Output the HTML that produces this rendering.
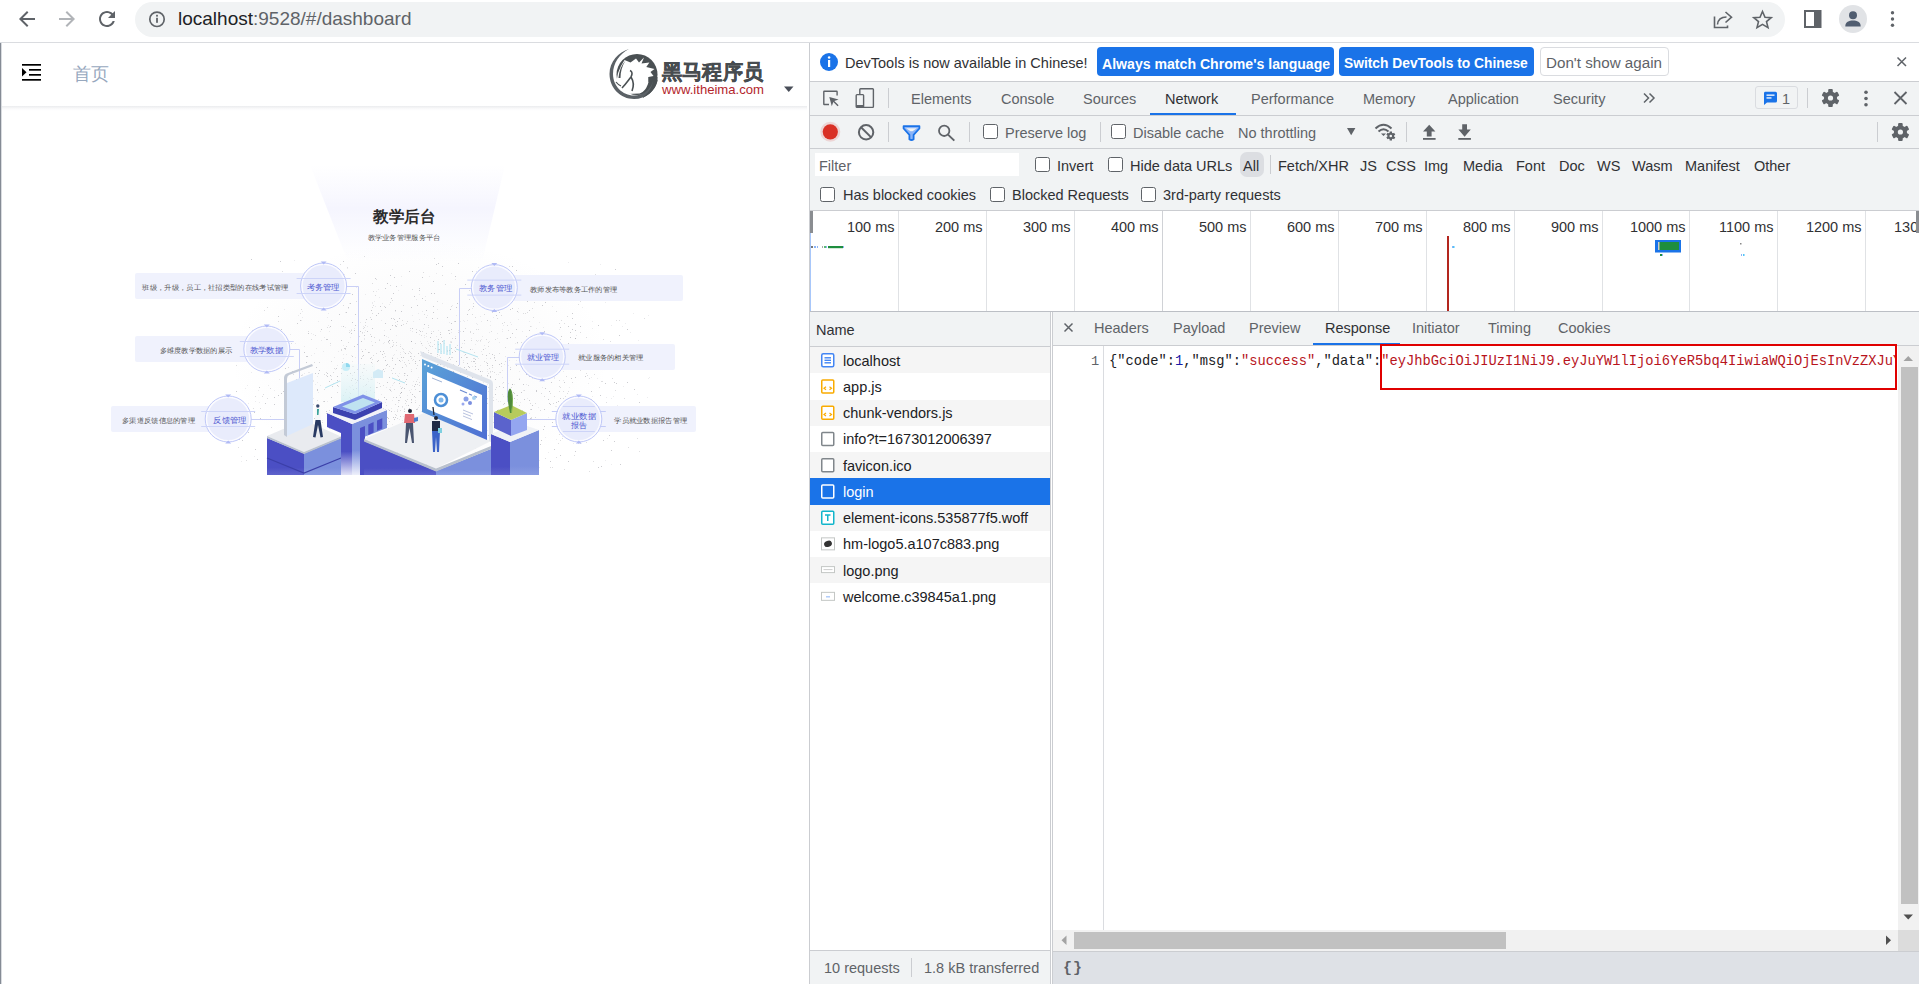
<!DOCTYPE html>
<html><head><meta charset="utf-8">
<style>
*{margin:0;padding:0;box-sizing:border-box}
html,body{width:1919px;height:984px;overflow:hidden;background:#fff;font-family:"Liberation Sans",sans-serif;position:relative}
.a{position:absolute}
.t{position:absolute;white-space:nowrap;line-height:20px;height:20px}
.dt{font-size:14.5px;color:#303134}
.g{color:#5f6368}
.cb{position:absolute;width:15px;height:15px;border:1.5px solid #5f6368;border-radius:2.5px;background:#fff}
.sep{position:absolute;width:1px;background:#cbcdd1}
.hl{position:absolute;height:1px;background:#cbcdd1}
</style></head>
<body>
<!-- ===== Browser chrome ===== -->
<div class="a" style="left:0;top:0;width:1919px;height:42px;background:#fff"></div>
<div class="hl" style="left:0;top:42px;width:1919px;background:#dadce0"></div>
<div id="chrome-icons"></div>
<div class="a" style="left:135px;top:2px;width:1650px;height:35px;border-radius:17.5px;background:#f1f3f4"></div>
<div class="t" style="left:178px;top:9px;font-size:19px;color:#5f6368"><span style="color:#202124">localhost</span>:9528/#/dashboard</div>

<!-- ===== Left page ===== -->
<div class="a" style="left:0;top:43px;width:1px;height:941px;background:#858b95"></div><div class="a" style="left:1px;top:43px;width:1px;height:941px;background:#d9dce0"></div>
<div class="a" style="left:2px;top:106px;width:805px;height:5px;background:linear-gradient(#ebecee,#fbfbfc 60%,#fff)"></div>
<div class="t" style="left:73px;top:64px;font-size:18px;color:#97a8be">首页</div>

<div id="logo">
<svg class="a" style="left:600px;top:44px" width="180" height="60">
<circle cx="37" cy="30.5" r="20.5" fill="#4a5053"/>
<path d="M16,40 L18,29 L21,22 L24.5,16 L30.5,18.5 L36,14.5 L39,18.5 L44,13.5 L41.5,19.5 L49.4,18.5 L46.3,23 L54.5,25 L50.5,28 L53.5,32 L48.5,33 L48.5,38 C47,44 44,48 39.6,49.5 L27.4,50 L18,42 Z" fill="#fff"/>
<path d="M18.5,34 C19,27 21.5,21 25.5,16.5 C22,22 20.5,28 20.5,34 Z" fill="#4a5053"/>
<path d="M30,26.5 C32.5,27.5 32.5,30 31,33 C33.5,37 34,42 32,47 M31,33 C28.5,36 26,40 22,44" fill="none" stroke="#4a5053" stroke-width="1.6"/>
<path d="M16,38 C17.5,40 19,41 21,42" fill="none" stroke="#4a5053" stroke-width="1.2"/>
<path d="M29,5 C18.5,8 9.5,17.5 9.5,30 C9.5,44 20.5,55 34,55 C46,55 55.5,47 57.5,36 L53,37 C51,45.5 43,51.5 34,51.5 C22.5,51.5 13,42 13,30 C13,19 19.5,10 29,5 Z" fill="#5b6166"/>
<path d="M48.5,33 L57.5,33 L57.5,37 C56,44 50,51 42,54 C49,49 52,43 53,37 L48.5,38 Z" fill="#4a5053"/>
<text x="62" y="35" font-size="20.5" font-weight="bold" fill="#474c50" stroke="#474c50" stroke-width="0.35" font-family="Liberation Sans, sans-serif" textLength="101" lengthAdjust="spacingAndGlyphs">黑马程序员</text>
<text x="62" y="50" font-size="13.6" fill="#b3262c" font-family="Liberation Sans, sans-serif" textLength="102" lengthAdjust="spacingAndGlyphs">www.itheima.com</text>
</svg>

</div>
<!-- ===== DevTools ===== -->
<div class="a" style="left:809px;top:43px;width:1px;height:941px;background:#cbcdd1"></div>
<!-- info bar -->
<div class="a" style="left:810px;top:43px;width:1109px;height:38px;background:#fff"></div>
<div class="hl" style="left:810px;top:81px;width:1109px"></div>
<div class="t dt" style="left:845px;top:53px">DevTools is now available in Chinese!</div>
<div class="a" style="left:1097px;top:47px;width:237px;height:29px;border-radius:4px;background:#1a73e8"></div>
<div class="t" style="left:1102px;top:53.5px;font-size:14.1px;font-weight:bold;color:#fff">Always match Chrome's language</div>
<div class="a" style="left:1339px;top:47px;width:195px;height:29px;border-radius:4px;background:#1a73e8"></div>
<div class="t" style="left:1344px;top:53.5px;font-size:13.8px;font-weight:bold;color:#fff">Switch DevTools to Chinese</div>
<div class="a" style="left:1540px;top:47px;width:129px;height:29px;border-radius:4px;background:#fff;border:1px solid #dadce0"></div>
<div class="t dt g" style="left:1546px;top:53px;font-size:15.2px">Don't show again</div>

<!-- main tab toolbar -->
<div class="a" style="left:810px;top:82px;width:1109px;height:33px;background:#f1f3f4"></div>
<div class="hl" style="left:810px;top:115px;width:1109px"></div>
<div class="sep" style="left:888px;top:88px;height:20px"></div>
<div class="t dt g" style="left:911px;top:89px">Elements</div>
<div class="t dt g" style="left:1001px;top:89px">Console</div>
<div class="t dt g" style="left:1083px;top:89px">Sources</div>
<div class="t dt" style="left:1165px;top:89px">Network</div>
<div class="a" style="left:1150px;top:113px;width:86px;height:2px;background:#1a73e8"></div>
<div class="t dt g" style="left:1251px;top:89px">Performance</div>
<div class="t dt g" style="left:1363px;top:89px">Memory</div>
<div class="t dt g" style="left:1448px;top:89px">Application</div>
<div class="t dt g" style="left:1553px;top:89px">Security</div>
<div class="a" style="left:1755px;top:86px;width:43px;height:23px;border:1px solid #dadce0;border-radius:3px"></div>
<div class="t dt g" style="left:1782px;top:89px">1</div>
<div class="sep" style="left:1807px;top:88px;height:20px"></div>

<!-- network toolbar -->
<div class="a" style="left:810px;top:116px;width:1109px;height:32px;background:#f1f3f4"></div>
<div class="hl" style="left:810px;top:148px;width:1109px"></div>
<div class="sep" style="left:888px;top:122px;height:20px"></div>
<div class="sep" style="left:969px;top:122px;height:20px"></div>
<div class="cb" style="left:983px;top:124px"></div>
<div class="t dt g" style="left:1005px;top:123px">Preserve log</div>
<div class="sep" style="left:1100px;top:122px;height:20px"></div>
<div class="cb" style="left:1111px;top:124px"></div>
<div class="t dt g" style="left:1133px;top:123px">Disable cache</div>
<div class="t dt g" style="left:1238px;top:123px">No throttling</div>
<div class="sep" style="left:1406px;top:122px;height:20px"></div>
<div class="sep" style="left:1877px;top:122px;height:20px"></div>

<!-- filter row -->
<div class="a" style="left:810px;top:149px;width:1109px;height:61px;background:#f1f3f4"></div>
<div class="a" style="left:815px;top:153px;width:204px;height:23px;background:#fff"></div>
<div class="t dt g" style="left:819px;top:155.5px">Filter</div>
<div class="cb" style="left:1035px;top:157px"></div>
<div class="t dt" style="left:1057px;top:155.5px">Invert</div>
<div class="cb" style="left:1108px;top:157px"></div>
<div class="t dt" style="left:1130px;top:155.5px">Hide data URLs</div>
<div class="a" style="left:1240px;top:152px;width:24px;height:25px;border-radius:7px;background:#dcdee2"></div>
<div class="t dt" style="left:1243px;top:155.5px">All</div>
<div class="sep" style="left:1270px;top:155px;height:19px"></div>
<div class="t dt" style="left:1278px;top:155.5px">Fetch/XHR</div>
<div class="t dt" style="left:1360px;top:155.5px">JS</div>
<div class="t dt" style="left:1386px;top:155.5px">CSS</div>
<div class="t dt" style="left:1424px;top:155.5px">Img</div>
<div class="t dt" style="left:1463px;top:155.5px">Media</div>
<div class="t dt" style="left:1516px;top:155.5px">Font</div>
<div class="t dt" style="left:1559px;top:155.5px">Doc</div>
<div class="t dt" style="left:1597px;top:155.5px">WS</div>
<div class="t dt" style="left:1632px;top:155.5px">Wasm</div>
<div class="t dt" style="left:1685px;top:155.5px">Manifest</div>
<div class="t dt" style="left:1754px;top:155.5px">Other</div>
<div class="cb" style="left:820px;top:187px"></div>
<div class="t dt" style="left:843px;top:185px">Has blocked cookies</div>
<div class="cb" style="left:990px;top:187px"></div>
<div class="t dt" style="left:1012px;top:185px">Blocked Requests</div>
<div class="cb" style="left:1141px;top:187px"></div>
<div class="t dt" style="left:1163px;top:185px">3rd-party requests</div>
<div class="hl" style="left:810px;top:210px;width:1109px"></div>

<!-- overview -->
<div class="a" style="left:810px;top:211px;width:1109px;height:100px;background:#fff"></div>
<div id="overview">
<div class="a" style="left:898px;top:211px;width:1px;height:100px;background:#e0e2e5"></div>
<div class="t dt" style="left:798px;top:216.5px;width:96.5px;text-align:right">100 ms</div>
<div class="a" style="left:986px;top:211px;width:1px;height:100px;background:#e0e2e5"></div>
<div class="t dt" style="left:886px;top:216.5px;width:96.5px;text-align:right">200 ms</div>
<div class="a" style="left:1074px;top:211px;width:1px;height:100px;background:#e0e2e5"></div>
<div class="t dt" style="left:974px;top:216.5px;width:96.5px;text-align:right">300 ms</div>
<div class="a" style="left:1162px;top:211px;width:1px;height:100px;background:#d0d2d6"></div>
<div class="t dt" style="left:1062px;top:216.5px;width:96.5px;text-align:right">400 ms</div>
<div class="a" style="left:1250px;top:211px;width:1px;height:100px;background:#e0e2e5"></div>
<div class="t dt" style="left:1150px;top:216.5px;width:96.5px;text-align:right">500 ms</div>
<div class="a" style="left:1338px;top:211px;width:1px;height:100px;background:#e0e2e5"></div>
<div class="t dt" style="left:1238px;top:216.5px;width:96.5px;text-align:right">600 ms</div>
<div class="a" style="left:1426px;top:211px;width:1px;height:100px;background:#e0e2e5"></div>
<div class="t dt" style="left:1326px;top:216.5px;width:96.5px;text-align:right">700 ms</div>
<div class="a" style="left:1514px;top:211px;width:1px;height:100px;background:#e0e2e5"></div>
<div class="t dt" style="left:1414px;top:216.5px;width:96.5px;text-align:right">800 ms</div>
<div class="a" style="left:1602px;top:211px;width:1px;height:100px;background:#e0e2e5"></div>
<div class="t dt" style="left:1502px;top:216.5px;width:96.5px;text-align:right">900 ms</div>
<div class="a" style="left:1689px;top:211px;width:1px;height:100px;background:#e0e2e5"></div>
<div class="t dt" style="left:1589px;top:216.5px;width:96.5px;text-align:right">1000 ms</div>
<div class="a" style="left:1777px;top:211px;width:1px;height:100px;background:#e0e2e5"></div>
<div class="t dt" style="left:1677px;top:216.5px;width:96.5px;text-align:right">1100 ms</div>
<div class="a" style="left:1865px;top:211px;width:1px;height:100px;background:#e0e2e5"></div>
<div class="t dt" style="left:1765px;top:216.5px;width:96.5px;text-align:right">1200 ms</div>
<div class="t dt" style="left:1894px;top:216.5px">1300 ms</div>
<div class="a" style="left:1916px;top:211px;width:3px;height:22px;background:#8a8d91"></div>
<div class="a" style="left:810px;top:211px;width:3px;height:22px;background:#8a8d91"></div>
<div class="a" style="left:810px;top:233px;width:1px;height:78px;background:#a8c7fa"></div>
<svg class="a" style="left:0;top:0" width="1919" height="984">
<rect x="811" y="246" width="2" height="2" fill="#777"/><rect x="814" y="246" width="2" height="2" fill="#8ab4f8"/><rect x="817" y="246" width="1" height="2" fill="#8ab4f8"/>
<rect x="822" y="246" width="1" height="2" fill="#aaa"/><rect x="824" y="246" width="2" height="2" fill="#5bb974"/><rect x="826" y="246" width="1" height="2" fill="#8ab4f8"/>
<rect x="828" y="246" width="15" height="2.2" fill="#1e8e3e"/><rect x="843" y="246" width="1" height="2" fill="#8ab4f8"/>
<rect x="1447" y="236" width="2" height="75" fill="#b3261e"/>
<rect x="1452" y="246" width="1" height="2" fill="#8ab4f8"/><rect x="1453" y="246" width="1.5" height="2" fill="#4fc3f7"/>
<rect x="1655" y="240" width="26" height="12.5" fill="#1a73e8"/>
<rect x="1658" y="242" width="21" height="8" fill="#1e8e3e"/><rect x="1658" y="242" width="1.5" height="8" fill="#ccc"/>
<rect x="1660" y="254" width="2" height="2" fill="#1e8e3e"/><rect x="1662" y="254" width="1" height="2" fill="#8ab4f8"/>
<rect x="1740" y="243" width="1.5" height="1.5" fill="#888"/>
<rect x="1741" y="254" width="1" height="2" fill="#8ab4f8"/><rect x="1743" y="254" width="1.5" height="2" fill="#4fc3f7"/>
</svg>
</div>
<div class="a" style="left:810px;top:311px;width:1109px;height:1px;background:#bcbfc5"></div>

<!-- list panel -->
<div class="a" style="left:810px;top:312px;width:240px;height:34px;background:#f1f3f4"></div>
<div class="hl" style="left:810px;top:346px;width:240px"></div>
<div class="t dt" style="left:816px;top:320px">Name</div>
<div id="rows">
<div class="a" style="left:810px;top:347.00px;width:240px;height:26.25px;background:#f5f5f5"></div>
<div class="t dt" style="left:843px;top:350.60px;color:#202124">localhost</div>
<div class="a" style="left:810px;top:373.25px;width:240px;height:26.25px;background:#fff"></div>
<div class="t dt" style="left:843px;top:376.85px;color:#202124">app.js</div>
<div class="a" style="left:810px;top:399.50px;width:240px;height:26.25px;background:#f5f5f5"></div>
<div class="t dt" style="left:843px;top:403.10px;color:#202124">chunk-vendors.js</div>
<div class="a" style="left:810px;top:425.75px;width:240px;height:26.25px;background:#fff"></div>
<div class="t dt" style="left:843px;top:429.35px;color:#202124">info?t=1673012006397</div>
<div class="a" style="left:810px;top:452.00px;width:240px;height:26.25px;background:#f5f5f5"></div>
<div class="t dt" style="left:843px;top:455.60px;color:#202124">favicon.ico</div>
<div class="a" style="left:810px;top:478.25px;width:240px;height:26.25px;background:#1a73e8"></div>
<div class="t dt" style="left:843px;top:481.85px;color:#fff">login</div>
<div class="a" style="left:810px;top:504.50px;width:240px;height:26.25px;background:#f5f5f5"></div>
<div class="t dt" style="left:843px;top:508.10px;color:#202124">element-icons.535877f5.woff</div>
<div class="a" style="left:810px;top:530.75px;width:240px;height:26.25px;background:#fff"></div>
<div class="t dt" style="left:843px;top:534.35px;color:#202124">hm-logo5.a107c883.png</div>
<div class="a" style="left:810px;top:557.00px;width:240px;height:26.25px;background:#f5f5f5"></div>
<div class="t dt" style="left:843px;top:560.60px;color:#202124">logo.png</div>
<div class="a" style="left:810px;top:583.25px;width:240px;height:26.25px;background:#fff"></div>
<div class="t dt" style="left:843px;top:586.85px;color:#202124">welcome.c39845a1.png</div>
<svg class="a" style="left:0;top:0" width="1919" height="984"><rect x="821.75" y="353.85" width="12" height="13" rx="1.5" fill="#fff" stroke="#4285f4" stroke-width="1.5"/><rect x="824.5" y="357.1" width="6.5" height="1.4" fill="#4285f4"/><rect x="824.5" y="359.6" width="6.5" height="1.4" fill="#4285f4"/><rect x="824.5" y="362.1" width="6.5" height="1.4" fill="#4285f4"/><rect x="821.75" y="380.1" width="12" height="13" rx="1" fill="#fff" stroke="#f9ab00" stroke-width="1.5"/><path d="M826,386.85 l-2,1.5 l2,1.5 M829.5,386.85 l2,1.5 l-2,1.5" fill="none" stroke="#f9ab00" stroke-width="1.2"/><rect x="821.75" y="406.35" width="12" height="13" rx="1" fill="#fff" stroke="#f9ab00" stroke-width="1.5"/><path d="M826,413.1 l-2,1.5 l2,1.5 M829.5,413.1 l2,1.5 l-2,1.5" fill="none" stroke="#f9ab00" stroke-width="1.2"/><rect x="821.75" y="432.6" width="12" height="13" rx="1" fill="#fff" stroke="#80868b" stroke-width="1.5"/><rect x="821.75" y="458.85" width="12" height="13" rx="1" fill="#fff" stroke="#80868b" stroke-width="1.5"/><rect x="821.75" y="485.1" width="12" height="13" rx="1" fill="#1a73e8" stroke="#fff" stroke-width="1.5"/><rect x="821.75" y="511.35" width="12" height="13" rx="1" fill="#fff" stroke="#12b5cb" stroke-width="1.5"/><path d="M825,515.1 h5.5 M827.75,515.1 v6" fill="none" stroke="#12b5cb" stroke-width="1.5"/><rect x="821.5" y="537.85" width="13" height="12" fill="#fff" stroke="#c4c7c5" stroke-width="1"/><ellipse cx="828" cy="543.85" rx="4" ry="3" fill="#333" transform="rotate(-20 828 543.85)"/><rect x="821.5" y="566.6" width="13" height="6" fill="#fff" stroke="#c4c7c5" stroke-width="1"/><rect x="823.5" y="569.1" width="9" height="1" fill="#ccc"/><rect x="821.5" y="592.35" width="13" height="8" fill="#fff" stroke="#c4c7c5" stroke-width="1"/><rect x="826" y="596.35" width="4" height="1" fill="#8ab4f8"/></svg>
</div>
<div class="a" style="left:1050px;top:312px;width:1px;height:672px;background:#cbcdd1"></div>
<div class="a" style="left:810px;top:950px;width:240px;height:1px;background:#cbcdd1"></div>
<div class="a" style="left:810px;top:951px;width:240px;height:33px;background:#f1f3f4"></div>
<div class="t dt g" style="left:824px;top:958px">10 requests</div>
<div class="sep" style="left:911px;top:958px;height:19px"></div>
<div class="t dt g" style="left:924px;top:958px">1.8 kB transferred</div>

<!-- response panel -->
<div class="a" style="left:1052px;top:312px;width:1px;height:672px;background:#cbcdd1"></div>
<div class="a" style="left:1053px;top:312px;width:866px;height:33px;background:#f1f3f4"></div>
<div class="hl" style="left:1053px;top:345px;width:866px"></div>
<div class="t dt g" style="left:1094px;top:318px">Headers</div>
<div class="t dt g" style="left:1173px;top:318px">Payload</div>
<div class="t dt g" style="left:1249px;top:318px">Preview</div>
<div class="t dt" style="left:1325px;top:318px">Response</div>
<div class="a" style="left:1313px;top:343px;width:87px;height:2px;background:#1a73e8"></div>
<div class="t dt g" style="left:1412px;top:318px">Initiator</div>
<div class="t dt g" style="left:1488px;top:318px">Timing</div>
<div class="t dt g" style="left:1558px;top:318px">Cookies</div>
<div class="a" style="left:1103px;top:346px;width:1px;height:584px;background:#dadce0"></div>
<div class="t" style="left:1091px;top:352px;font-size:13.7px;font-family:'Liberation Mono',monospace;color:#5f6368">1</div>
<div class="a" style="left:1109px;top:346px;width:788px;height:30px;overflow:hidden">
<div class="t" style="left:0;top:6px;font-size:13.75px;font-family:'Liberation Mono',monospace;color:#202124">{"code":<span style="color:#1a1aa6">1</span>,"msg":<span style="color:#b8141c">"success"</span>,"data":<span style="color:#b8141c">"eyJhbGciOiJIUzI1NiJ9.eyJuYW1lIjoi6YeR5bq4IiwiaWQiOjEsInVzZXJuYW1lIjoiamlueW9uZyJ9"</span>}</div>
</div>
<div class="a" style="left:1380px;top:344px;width:517px;height:46px;border:2px solid #e00000"></div>
<!-- scrollbars -->
<div class="a" style="left:1898px;top:346px;width:21px;height:584px;background:#f1f1f1"></div>
<div class="a" style="left:1901px;top:367px;width:17px;height:537px;background:#c1c1c1"></div>
<div class="a" style="left:1053px;top:930px;width:845px;height:21px;background:#f1f1f1"></div>
<div class="a" style="left:1074px;top:932px;width:432px;height:17px;background:#c1c1c1"></div>
<div class="a" style="left:1898px;top:930px;width:21px;height:21px;background:#dcdcdc"></div>
<div class="a" style="left:1053px;top:951px;width:866px;height:1px;background:#cbcdd1"></div>
<div class="a" style="left:1053px;top:952px;width:866px;height:32px;background:#dee1e6"></div>

<div class="t" style="left:1063px;top:959px;font-size:15px;font-weight:bold;font-family:'Liberation Mono',monospace;color:#5f6368;letter-spacing:1px">{}</div>
<div id="icons">
<svg class="a" style="left:0;top:0" width="1919" height="984">
<!-- chrome nav -->
<path transform="translate(15,7)" d="M20 11H7.83l5.59-5.59L12 4l-8 8 8 8 1.41-1.41L7.83 13H20v-2z" fill="#5f6368"/>
<path transform="translate(55,7)" d="M12 4l-1.41 1.41L16.17 11H4v2h12.17l-5.58 5.59L12 20l8-8z" fill="#b1b4b8"/>
<path transform="translate(95,7)" d="M17.65 6.35C16.2 4.9 14.21 4 12 4c-4.42 0-7.99 3.58-7.99 8s3.57 8 7.99 8c3.73 0 6.84-2.55 7.73-6h-2.08c-.82 2.33-3.04 4-5.65 4-3.31 0-6-2.69-6-6s2.69-6 6-6c1.66 0 3.14.69 4.22 1.78L13 11h7V4l-2.35 2.35z" fill="#5f6368"/>
<circle cx="157" cy="19.3" r="7.2" fill="none" stroke="#5f6368" stroke-width="1.7"/>
<rect x="156.1" y="17.8" width="1.8" height="5" fill="#5f6368"/><rect x="156.1" y="14.8" width="1.8" height="1.8" fill="#5f6368"/>
<!-- share -->
<path d="M1714.5,16.5 V27.5 H1727.5 V25.5" fill="none" stroke="#5f6368" stroke-width="1.6"/>
<path d="M1717.5,24.5 C1718,19 1721.5,17 1726.5,17" fill="none" stroke="#5f6368" stroke-width="1.6"/>
<path d="M1725.5,12 L1731.5,17.2 L1725.5,22.5" fill="none" stroke="#5f6368" stroke-width="1.6" stroke-linejoin="miter"/>
<!-- star -->
<path d="M1762.5,11.5 L1765,17.2 L1771.2,17.6 L1766.5,21.6 L1768,27.6 L1762.5,24.4 L1757,27.6 L1758.5,21.6 L1753.8,17.6 L1760,17.2 Z" fill="none" stroke="#5f6368" stroke-width="1.6" stroke-linejoin="miter"/>
<!-- sidebar -->
<rect x="1805" y="11" width="15.5" height="16" fill="none" stroke="#5f6368" stroke-width="2"/>
<rect x="1814" y="11" width="6.5" height="16" fill="#5f6368"/>
<!-- profile -->
<circle cx="1853" cy="19" r="14" fill="#e1e3e6"/>
<circle cx="1853" cy="15.3" r="4" fill="#505d70"/>
<path d="M1845.3,26.5 C1845.3,22 1849,20.6 1853,20.6 C1857,20.6 1860.7,22 1860.7,26.5 Z" fill="#505d70"/>
<!-- kebab -->
<circle cx="1892.5" cy="12.8" r="1.7" fill="#5f6368"/><circle cx="1892.5" cy="19" r="1.7" fill="#5f6368"/><circle cx="1892.5" cy="25.2" r="1.7" fill="#5f6368"/>

<!-- left page: hamburger -->
<rect x="22" y="64" width="19" height="1.7" fill="#000"/>
<rect x="29" y="69" width="12" height="1.7" fill="#000"/>
<rect x="29" y="74" width="12" height="1.7" fill="#000"/>
<rect x="22" y="79" width="19" height="1.7" fill="#000"/>
<path d="M22,68 L26.5,72.3 L22,76.5 Z" fill="#000"/>
<!-- caret -->
<path d="M784,86.5 H793.5 L788.75,92 Z" fill="#494e58"/>

<!-- devtools info bar -->
<circle cx="829" cy="62" r="9" fill="#1a73e8"/>
<rect x="828" y="60" width="2.2" height="7" fill="#fff"/><circle cx="829.1" cy="57.6" r="1.25" fill="#fff"/>
<path d="M1897.5,57.5 L1906,66 M1906,57.5 L1897.5,66" stroke="#5f6368" stroke-width="1.5"/>

<!-- main toolbar icons -->
<path d="M829,104.5 H824.2 Q823.8,104.5 823.8,104 V91.7 Q823.8,91.2 824.2,91.2 H836.6 Q837.1,91.2 837.1,91.7 V95.5" fill="none" stroke="#5f6368" stroke-width="1.4"/>
<path d="M829.3,97 L838.6,99.4 L834.3,100.9 L838.6,105.2 L837.6,106.2 L833.3,101.9 L831.8,106.2 Z" fill="#5f6368"/>
<rect x="859.8" y="88.8" width="13.6" height="18.6" rx="0.8" fill="none" stroke="#5f6368" stroke-width="1.4"/>
<rect x="856.2" y="94.6" width="7.4" height="12.6" rx="0.8" fill="#f1f3f4" stroke="#5f6368" stroke-width="1.4"/>
<rect x="856.2" y="105" width="7.4" height="2.2" fill="#5f6368"/>
<!-- » -->
<path d="M1644,93.5 L1648.5,98 L1644,102.5 M1649.5,93.5 L1654,98 L1649.5,102.5" fill="none" stroke="#5f6368" stroke-width="1.5"/>
<!-- badge msg -->
<path d="M1765,91.8 H1775.5 Q1777,91.8 1777,93.3 V101 Q1777,102.5 1775.5,102.5 H1767 L1764,105 V93.3 Q1764,91.8 1765,91.8 Z" fill="#1a73e8"/>
<rect x="1766.5" y="94.5" width="8" height="1.3" fill="#fff"/><rect x="1766.5" y="97.3" width="5" height="1.3" fill="#fff"/>
<!-- gears -->
<g id="gear" transform="translate(1830.5,98)">
<g fill="#5f6368">
<rect x="-2.3" y="-9" width="4.6" height="18" rx="1"/>
<rect x="-2.3" y="-9" width="4.6" height="18" rx="1" transform="rotate(60)"/>
<rect x="-2.3" y="-9" width="4.6" height="18" rx="1" transform="rotate(120)"/>
<circle r="6.6"/>
</g>
<circle r="2.6" fill="#f1f3f4"/>
</g>
<g transform="translate(1900.4,132)">
<g fill="#5f6368">
<rect x="-2.3" y="-9" width="4.6" height="18" rx="1"/>
<rect x="-2.3" y="-9" width="4.6" height="18" rx="1" transform="rotate(60)"/>
<rect x="-2.3" y="-9" width="4.6" height="18" rx="1" transform="rotate(120)"/>
<circle r="6.6"/>
</g>
<circle r="2.6" fill="#f1f3f4"/>
</g>
<circle cx="1866" cy="92.3" r="1.8" fill="#5f6368"/><circle cx="1866" cy="98.5" r="1.8" fill="#5f6368"/><circle cx="1866" cy="104.7" r="1.8" fill="#5f6368"/>
<path d="M1894.5,92 L1906.5,104 M1906.5,92 L1894.5,104" stroke="#5f6368" stroke-width="1.8"/>

<!-- network toolbar -->
<circle cx="830.3" cy="131.8" r="10" fill="#d93025" opacity="0.15"/>
<circle cx="830.3" cy="131.8" r="7.6" fill="#d93025"/>
<circle cx="866.1" cy="132.3" r="7.2" fill="none" stroke="#5f6368" stroke-width="2"/>
<path d="M861,127.2 L871.2,137.4" stroke="#5f6368" stroke-width="2"/>
<path d="M903.6,126.2 H919.4 V128.5 L913.6,134.8 V139.2 Q911.5,140.8 909.4,139.2 V134.8 L903.6,128.5 Z" fill="#8ab4f8" stroke="#1a73e8" stroke-width="1.8" stroke-linejoin="round"/>
<path d="M906,128.2 H917 L912.5,131.2 H910.5 Z" fill="#f1f3f4"/>
<circle cx="944.2" cy="130.8" r="5.2" fill="none" stroke="#5f6368" stroke-width="1.8"/>
<path d="M948,134.6 L954.3,140.6" stroke="#5f6368" stroke-width="2"/>
<path d="M1347,128 H1355.4 L1351.2,135.2 Z" fill="#5f6368"/>
<!-- wifi+gear -->
<path d="M1375.5,128.5 Q1383.5,121 1391.5,128.5" fill="none" stroke="#5f6368" stroke-width="2"/>
<path d="M1378.5,131.5 Q1383.5,127 1388.5,131.5" fill="none" stroke="#5f6368" stroke-width="2"/>
<path d="M1381,133.5 H1386 L1383.5,136 Z" fill="#5f6368"/>
<g transform="translate(1390.8,136)"><g fill="#5f6368"><rect x="-1.2" y="-4.5" width="2.4" height="9"/><rect x="-1.2" y="-4.5" width="2.4" height="9" transform="rotate(60)"/><rect x="-1.2" y="-4.5" width="2.4" height="9" transform="rotate(120)"/><circle r="3.3"/></g><circle r="1.3" fill="#f1f3f4"/></g>
<!-- upload/download -->
<path d="M1429.2,124.7 L1435.4,131.5 H1431.6 V136.5 H1426.8 V131.5 H1423 Z" fill="#5f6368"/>
<rect x="1423" y="138" width="12.6" height="1.8" fill="#5f6368"/>
<path d="M1462.2,124.3 H1467 V129.6 H1470.8 L1464.6,136.8 L1458.4,129.6 H1462.2 Z" fill="#5f6368"/>
<rect x="1458.3" y="138" width="12.6" height="1.8" fill="#5f6368"/>

<!-- response X -->
<path d="M1064.5,323.5 L1072.5,331.5 M1072.5,323.5 L1064.5,331.5" stroke="#5f6368" stroke-width="1.5"/>
<!-- scroll arrows -->
<path d="M1903.5,361 H1913 L1908.25,356 Z" fill="#a3a3a3"/>
<path d="M1903.5,914.5 H1913 L1908.25,919.5 Z" fill="#505050"/>
<path d="M1066.5,935.5 V945 L1061.5,940.25 Z" fill="#a3a3a3"/>
<path d="M1886,935.5 V945 L1891,940.25 Z" fill="#505050"/>
</svg>

</div>
<div id="illus">
<svg class="a" style="left:0;top:0" width="809" height="984"><defs>
<linearGradient id="fan" x1="0" y1="0" x2="0" y2="1"><stop offset="0" stop-color="#f6f6fe" stop-opacity="0"/><stop offset="0.45" stop-color="#f5f5fe"/><stop offset="1" stop-color="#f6f7fe" stop-opacity="0"/></linearGradient>
<radialGradient id="dust" cx="0.5" cy="0.5" r="0.5"><stop offset="0" stop-color="#9a9aa6" stop-opacity="0.05"/><stop offset="0.7" stop-color="#9a9aa6" stop-opacity="0.025"/><stop offset="1" stop-color="#9a9aa6" stop-opacity="0"/></radialGradient>
<linearGradient id="fadeL" x1="0" y1="0" x2="0" y2="1"><stop offset="0.8" stop-color="#4b4fc4"/><stop offset="1" stop-color="#5f63cb"/></linearGradient>
<linearGradient id="fadeR" x1="0" y1="0" x2="0" y2="1"><stop offset="0.8" stop-color="#7b90dd"/><stop offset="1" stop-color="#8a9de2"/></linearGradient>
<linearGradient id="col" x1="0" y1="0" x2="0" y2="1"><stop offset="0.62" stop-color="#4b4fc4"/><stop offset="1" stop-color="#e2e3f7"/></linearGradient>
<linearGradient id="colR" x1="0" y1="0" x2="0" y2="1"><stop offset="0.62" stop-color="#7b90dd"/><stop offset="1" stop-color="#eef0fb"/></linearGradient>
<linearGradient id="scr" x1="0" y1="0" x2="1" y2="1"><stop offset="0" stop-color="#5aa3d8"/><stop offset="1" stop-color="#4f6fd3"/></linearGradient>
<linearGradient id="holo" x1="0" y1="0" x2="0" y2="1"><stop offset="0" stop-color="#e6f6f8" stop-opacity="0.2"/><stop offset="1" stop-color="#d6f0f4" stop-opacity="0.9"/></linearGradient>
</defs><path d="M310,165 L505,165 L482,262 L348,262 Z" fill="url(#fan)"/><ellipse cx="420" cy="360" rx="190" ry="120" fill="url(#dust)"/><path d="M612 410h1v1h-1zM555 406h1v1h-1zM345 327h1v1h-1zM346 354h1v1h-1zM467 387h1v1h-1zM386 412h1v1h-1zM424 335h1v1h-1zM502 432h1v1h-1zM338 351h1v1h-1zM594 414h1v1h-1zM490 372h1v1h-1zM520 446h1v1h-1zM347 432h1v1h-1zM470 388h1v1h-1zM437 380h1v1h-1zM406 366h1v1h-1zM349 386h1v1h-1zM503 325h1v1h-1zM451 332h1v1h-1zM302 317h1v1h-1zM420 391h1v1h-1zM463 320h1v1h-1zM388 409h1v1h-1zM282 297h1v1h-1zM355 414h1v1h-1zM425 347h1v1h-1zM505 438h1v1h-1zM363 326h1v1h-1zM250 425h1v1h-1zM253 351h1v1h-1zM542 387h1v1h-1zM301 320h1v1h-1zM309 372h1v1h-1zM460 367h1v1h-1zM307 377h1v1h-1zM622 326h1v1h-1zM464 355h1v1h-1zM418 407h1v1h-1zM352 375h1v1h-1zM605 460h1v1h-1zM295 343h1v1h-1zM433 390h1v1h-1zM448 358h1v1h-1zM519 429h1v1h-1zM350 331h1v1h-1zM406 443h1v1h-1zM462 379h1v1h-1zM422 311h1v1h-1zM519 371h1v1h-1zM624 368h1v1h-1zM405 439h1v1h-1zM393 345h1v1h-1zM590 435h1v1h-1zM411 389h1v1h-1zM392 454h1v1h-1zM330 345h1v1h-1zM437 309h1v1h-1zM372 303h1v1h-1zM630 332h1v1h-1zM505 356h1v1h-1zM329 327h1v1h-1zM353 366h1v1h-1zM534 378h1v1h-1zM413 381h1v1h-1zM484 345h1v1h-1zM477 341h1v1h-1zM283 353h1v1h-1zM544 379h1v1h-1zM364 368h1v1h-1zM411 400h1v1h-1zM312 454h1v1h-1zM312 441h1v1h-1zM370 415h1v1h-1zM484 277h1v1h-1zM553 289h1v1h-1zM549 367h1v1h-1zM600 264h1v1h-1zM450 342h1v1h-1zM584 428h1v1h-1zM450 341h1v1h-1zM383 343h1v1h-1zM420 355h1v1h-1zM419 427h1v1h-1zM363 386h1v1h-1zM543 327h1v1h-1zM427 315h1v1h-1zM368 381h1v1h-1zM496 424h1v1h-1zM516 360h1v1h-1zM390 389h1v1h-1zM418 430h1v1h-1zM568 425h1v1h-1zM279 469h1v1h-1zM438 364h1v1h-1zM259 402h1v1h-1zM402 420h1v1h-1zM470 373h1v1h-1zM592 328h1v1h-1zM385 460h1v1h-1zM493 397h1v1h-1zM436 400h1v1h-1zM310 388h1v1h-1zM641 366h1v1h-1zM431 403h1v1h-1zM496 374h1v1h-1zM436 421h1v1h-1zM554 377h1v1h-1zM565 368h1v1h-1zM412 331h1v1h-1zM398 402h1v1h-1zM396 350h1v1h-1zM469 424h1v1h-1zM384 330h1v1h-1zM438 386h1v1h-1zM351 355h1v1h-1zM457 393h1v1h-1zM296 287h1v1h-1zM410 445h1v1h-1zM525 420h1v1h-1zM384 342h1v1h-1zM372 379h1v1h-1zM350 337h1v1h-1zM456 315h1v1h-1zM487 371h1v1h-1zM597 378h1v1h-1zM443 433h1v1h-1zM344 274h1v1h-1zM311 355h1v1h-1zM415 400h1v1h-1zM508 461h1v1h-1zM461 380h1v1h-1zM463 352h1v1h-1zM504 364h1v1h-1zM400 386h1v1h-1zM585 346h1v1h-1zM436 381h1v1h-1zM335 369h1v1h-1zM487 369h1v1h-1zM320 302h1v1h-1zM400 352h1v1h-1zM425 459h1v1h-1zM508 365h1v1h-1zM512 384h1v1h-1zM472 349h1v1h-1zM518 308h1v1h-1zM406 365h1v1h-1zM449 390h1v1h-1zM392 357h1v1h-1zM427 367h1v1h-1zM480 371h1v1h-1zM424 405h1v1h-1zM391 432h1v1h-1zM518 319h1v1h-1zM437 382h1v1h-1zM395 469h1v1h-1zM304 373h1v1h-1zM452 372h1v1h-1zM349 303h1v1h-1zM361 349h1v1h-1zM514 412h1v1h-1zM428 406h1v1h-1zM381 451h1v1h-1zM502 329h1v1h-1zM378 371h1v1h-1zM543 365h1v1h-1zM423 373h1v1h-1zM435 405h1v1h-1zM411 356h1v1h-1zM428 420h1v1h-1zM423 371h1v1h-1zM311 333h1v1h-1zM439 355h1v1h-1zM506 338h1v1h-1zM446 393h1v1h-1zM305 413h1v1h-1zM313 381h1v1h-1zM530 351h1v1h-1zM448 411h1v1h-1zM607 438h1v1h-1zM443 469h1v1h-1zM463 371h1v1h-1zM374 462h1v1h-1zM419 319h1v1h-1zM368 445h1v1h-1zM428 412h1v1h-1zM456 421h1v1h-1zM464 321h1v1h-1zM344 368h1v1h-1zM368 379h1v1h-1zM336 418h1v1h-1zM358 424h1v1h-1zM409 454h1v1h-1zM455 279h1v1h-1zM434 395h1v1h-1zM532 378h1v1h-1zM372 379h1v1h-1zM592 321h1v1h-1zM488 391h1v1h-1zM471 415h1v1h-1zM422 345h1v1h-1zM539 467h1v1h-1zM505 426h1v1h-1zM523 356h1v1h-1zM403 416h1v1h-1zM397 358h1v1h-1zM382 370h1v1h-1zM424 436h1v1h-1zM364 398h1v1h-1zM414 431h1v1h-1zM363 375h1v1h-1zM448 401h1v1h-1zM534 440h1v1h-1zM520 402h1v1h-1zM435 360h1v1h-1zM613 396h1v1h-1zM445 414h1v1h-1zM387 445h1v1h-1zM362 333h1v1h-1zM421 355h1v1h-1zM429 364h1v1h-1zM474 398h1v1h-1zM366 370h1v1h-1zM241 461h1v1h-1zM324 337h1v1h-1zM483 382h1v1h-1zM313 306h1v1h-1zM508 383h1v1h-1zM380 373h1v1h-1zM304 346h1v1h-1zM523 390h1v1h-1zM254 456h1v1h-1zM399 419h1v1h-1zM386 471h1v1h-1zM482 336h1v1h-1zM480 365h1v1h-1zM568 262h1v1h-1zM642 360h1v1h-1zM334 406h1v1h-1zM358 351h1v1h-1zM381 320h1v1h-1zM314 353h1v1h-1zM367 436h1v1h-1zM477 422h1v1h-1zM490 321h1v1h-1zM515 343h1v1h-1zM253 365h1v1h-1zM370 379h1v1h-1zM555 406h1v1h-1zM399 395h1v1h-1zM530 340h1v1h-1zM343 354h1v1h-1zM471 396h1v1h-1zM298 315h1v1h-1zM306 408h1v1h-1zM312 436h1v1h-1zM258 390h1v1h-1zM403 448h1v1h-1zM360 448h1v1h-1zM388 337h1v1h-1zM438 409h1v1h-1zM510 423h1v1h-1zM592 396h1v1h-1zM398 431h1v1h-1zM376 291h1v1h-1zM371 453h1v1h-1zM408 417h1v1h-1zM582 307h1v1h-1zM351 442h1v1h-1zM419 294h1v1h-1zM394 354h1v1h-1zM411 369h1v1h-1zM493 317h1v1h-1zM354 328h1v1h-1zM400 344h1v1h-1zM588 383h1v1h-1zM352 361h1v1h-1zM274 352h1v1h-1zM489 332h1v1h-1zM454 398h1v1h-1zM563 371h1v1h-1zM481 444h1v1h-1zM389 304h1v1h-1zM480 341h1v1h-1zM431 331h1v1h-1zM379 339h1v1h-1zM475 344h1v1h-1zM409 390h1v1h-1zM317 382h1v1h-1zM569 421h1v1h-1zM447 383h1v1h-1zM397 410h1v1h-1zM302 311h1v1h-1zM425 296h1v1h-1zM524 362h1v1h-1zM343 358h1v1h-1zM484 468h1v1h-1zM485 348h1v1h-1zM308 385h1v1h-1zM302 374h1v1h-1zM398 290h1v1h-1zM476 438h1v1h-1zM548 452h1v1h-1zM409 390h1v1h-1zM569 387h1v1h-1zM386 387h1v1h-1zM502 377h1v1h-1zM611 325h1v1h-1zM356 287h1v1h-1zM587 352h1v1h-1zM263 350h1v1h-1zM650 406h1v1h-1zM573 443h1v1h-1zM539 322h1v1h-1zM526 384h1v1h-1zM320 385h1v1h-1zM443 366h1v1h-1zM346 419h1v1h-1zM397 324h1v1h-1zM531 326h1v1h-1zM540 335h1v1h-1zM364 413h1v1h-1zM376 434h1v1h-1zM496 423h1v1h-1zM316 348h1v1h-1zM472 366h1v1h-1zM579 437h1v1h-1zM294 260h1v1h-1zM551 345h1v1h-1zM254 428h1v1h-1zM481 339h1v1h-1zM423 422h1v1h-1zM442 303h1v1h-1zM411 444h1v1h-1zM488 465h1v1h-1zM406 405h1v1h-1zM416 458h1v1h-1zM291 284h1v1h-1zM396 335h1v1h-1zM552 306h1v1h-1zM465 352h1v1h-1zM466 405h1v1h-1zM427 467h1v1h-1zM437 356h1v1h-1zM308 379h1v1h-1zM606 397h1v1h-1zM250 419h1v1h-1zM349 392h1v1h-1zM562 436h1v1h-1zM567 354h1v1h-1zM369 396h1v1h-1zM462 450h1v1h-1zM490 415h1v1h-1zM378 435h1v1h-1zM502 370h1v1h-1zM519 378h1v1h-1zM454 350h1v1h-1zM431 355h1v1h-1zM392 269h1v1h-1zM555 368h1v1h-1zM501 455h1v1h-1zM351 329h1v1h-1zM247 360h1v1h-1zM394 411h1v1h-1zM426 336h1v1h-1zM514 384h1v1h-1zM379 297h1v1h-1zM502 308h1v1h-1zM499 342h1v1h-1zM334 293h1v1h-1zM349 330h1v1h-1zM391 408h1v1h-1zM464 343h1v1h-1zM520 446h1v1h-1zM328 313h1v1h-1zM475 448h1v1h-1zM421 428h1v1h-1zM305 298h1v1h-1zM315 384h1v1h-1zM441 353h1v1h-1zM510 322h1v1h-1zM470 394h1v1h-1zM463 427h1v1h-1zM500 423h1v1h-1zM331 376h1v1h-1zM417 408h1v1h-1zM348 308h1v1h-1zM315 454h1v1h-1zM447 367h1v1h-1zM242 418h1v1h-1zM474 401h1v1h-1zM481 321h1v1h-1zM548 347h1v1h-1zM447 404h1v1h-1zM448 403h1v1h-1zM539 460h1v1h-1zM605 302h1v1h-1zM290 334h1v1h-1zM486 414h1v1h-1zM539 419h1v1h-1zM343 345h1v1h-1zM404 352h1v1h-1zM412 360h1v1h-1zM409 420h1v1h-1zM509 391h1v1h-1zM408 448h1v1h-1zM475 468h1v1h-1zM352 375h1v1h-1zM548 417h1v1h-1zM251 372h1v1h-1zM516 402h1v1h-1zM474 422h1v1h-1zM476 323h1v1h-1zM348 410h1v1h-1zM444 343h1v1h-1zM374 301h1v1h-1zM620 422h1v1h-1zM534 300h1v1h-1zM358 300h1v1h-1zM436 273h1v1h-1zM471 438h1v1h-1zM551 382h1v1h-1zM511 435h1v1h-1zM331 418h1v1h-1zM545 437h1v1h-1zM499 437h1v1h-1zM463 360h1v1h-1zM504 441h1v1h-1zM460 331h1v1h-1zM476 422h1v1h-1zM514 421h1v1h-1zM428 421h1v1h-1zM397 409h1v1h-1zM509 360h1v1h-1zM481 278h1v1h-1zM451 418h1v1h-1zM352 435h1v1h-1zM336 446h1v1h-1zM457 440h1v1h-1zM321 340h1v1h-1zM617 405h1v1h-1zM555 365h1v1h-1zM480 316h1v1h-1zM429 404h1v1h-1zM310 424h1v1h-1zM538 407h1v1h-1zM536 328h1v1h-1zM520 460h1v1h-1zM397 427h1v1h-1zM390 387h1v1h-1zM467 320h1v1h-1zM304 272h1v1h-1zM446 387h1v1h-1zM418 313h1v1h-1zM623 386h1v1h-1zM293 388h1v1h-1zM347 268h1v1h-1zM395 322h1v1h-1zM503 396h1v1h-1zM390 347h1v1h-1zM444 366h1v1h-1zM241 456h1v1h-1zM497 436h1v1h-1zM284 457h1v1h-1zM511 324h1v1h-1zM477 324h1v1h-1zM391 391h1v1h-1zM346 365h1v1h-1zM498 401h1v1h-1zM355 357h1v1h-1zM474 381h1v1h-1zM365 294h1v1h-1zM551 347h1v1h-1zM576 335h1v1h-1zM416 299h1v1h-1zM497 333h1v1h-1zM480 277h1v1h-1zM436 336h1v1h-1zM513 357h1v1h-1zM354 403h1v1h-1zM425 467h1v1h-1zM329 331h1v1h-1zM436 422h1v1h-1zM423 399h1v1h-1zM397 375h1v1h-1zM531 351h1v1h-1zM331 467h1v1h-1zM301 442h1v1h-1zM363 446h1v1h-1zM459 408h1v1h-1zM360 322h1v1h-1zM330 447h1v1h-1zM354 430h1v1h-1zM587 293h1v1h-1zM413 433h1v1h-1zM446 416h1v1h-1zM451 273h1v1h-1zM364 332h1v1h-1zM424 356h1v1h-1zM524 349h1v1h-1zM399 373h1v1h-1zM481 351h1v1h-1zM386 336h1v1h-1zM320 331h1v1h-1zM496 399h1v1h-1zM312 428h1v1h-1zM362 429h1v1h-1zM444 340h1v1h-1zM493 416h1v1h-1zM487 430h1v1h-1zM432 451h1v1h-1zM590 363h1v1h-1zM645 419h1v1h-1zM647 356h1v1h-1zM367 326h1v1h-1zM499 372h1v1h-1zM288 395h1v1h-1zM605 355h1v1h-1zM478 377h1v1h-1zM337 365h1v1h-1zM441 351h1v1h-1zM304 293h1v1h-1zM382 303h1v1h-1zM400 354h1v1h-1zM611 398h1v1h-1zM500 401h1v1h-1zM451 341h1v1h-1zM611 464h1v1h-1zM358 386h1v1h-1zM379 437h1v1h-1zM405 373h1v1h-1zM420 341h1v1h-1zM494 288h1v1h-1zM385 368h1v1h-1zM502 394h1v1h-1zM413 321h1v1h-1zM649 377h1v1h-1zM515 337h1v1h-1zM350 387h1v1h-1zM562 349h1v1h-1zM449 322h1v1h-1zM465 393h1v1h-1zM410 330h1v1h-1zM313 398h1v1h-1zM528 345h1v1h-1zM382 403h1v1h-1zM375 306h1v1h-1zM376 423h1v1h-1zM356 398h1v1h-1zM347 368h1v1h-1zM522 331h1v1h-1zM476 271h1v1h-1zM423 328h1v1h-1zM507 409h1v1h-1zM648 378h1v1h-1zM487 384h1v1h-1zM458 330h1v1h-1zM472 308h1v1h-1zM268 385h1v1h-1zM563 380h1v1h-1zM550 362h1v1h-1zM412 385h1v1h-1zM392 385h1v1h-1zM505 268h1v1h-1zM442 414h1v1h-1zM593 367h1v1h-1zM537 360h1v1h-1zM347 460h1v1h-1zM472 413h1v1h-1zM518 437h1v1h-1zM317 376h1v1h-1zM574 418h1v1h-1zM455 405h1v1h-1zM340 381h1v1h-1zM407 395h1v1h-1zM603 416h1v1h-1zM475 366h1v1h-1zM497 338h1v1h-1zM327 317h1v1h-1zM468 384h1v1h-1zM402 360h1v1h-1zM327 401h1v1h-1zM591 377h1v1h-1zM383 427h1v1h-1zM321 436h1v1h-1zM486 358h1v1h-1zM481 286h1v1h-1zM355 383h1v1h-1zM247 385h1v1h-1zM583 430h1v1h-1zM478 340h1v1h-1zM372 302h1v1h-1zM319 466h1v1h-1zM393 383h1v1h-1zM456 407h1v1h-1zM404 408h1v1h-1zM433 399h1v1h-1zM550 338h1v1h-1zM499 413h1v1h-1zM392 424h1v1h-1zM352 366h1v1h-1zM403 351h1v1h-1zM498 409h1v1h-1zM544 338h1v1h-1zM502 383h1v1h-1zM494 358h1v1h-1zM307 428h1v1h-1zM458 382h1v1h-1zM433 410h1v1h-1zM463 402h1v1h-1zM418 377h1v1h-1zM440 410h1v1h-1zM437 395h1v1h-1zM438 330h1v1h-1zM381 394h1v1h-1zM455 336h1v1h-1zM429 440h1v1h-1zM442 377h1v1h-1zM395 326h1v1h-1zM464 390h1v1h-1zM334 357h1v1h-1zM401 285h1v1h-1zM502 412h1v1h-1zM279 437h1v1h-1zM541 372h1v1h-1zM529 321h1v1h-1zM393 344h1v1h-1zM302 375h1v1h-1zM328 325h1v1h-1zM274 390h1v1h-1zM428 343h1v1h-1zM421 411h1v1h-1zM498 374h1v1h-1zM489 341h1v1h-1zM517 343h1v1h-1zM385 402h1v1h-1zM563 430h1v1h-1zM529 413h1v1h-1zM450 375h1v1h-1zM527 398h1v1h-1zM529 413h1v1h-1zM422 361h1v1h-1zM360 364h1v1h-1zM318 321h1v1h-1zM647 397h1v1h-1zM279 379h1v1h-1zM309 383h1v1h-1zM499 308h1v1h-1zM424 337h1v1h-1zM417 379h1v1h-1zM364 392h1v1h-1zM282 466h1v1h-1zM399 360h1v1h-1zM625 323h1v1h-1zM425 378h1v1h-1zM427 341h1v1h-1zM284 309h1v1h-1zM460 321h1v1h-1zM429 276h1v1h-1zM492 415h1v1h-1zM633 313h1v1h-1zM378 375h1v1h-1zM318 392h1v1h-1zM341 431h1v1h-1zM559 329h1v1h-1zM392 400h1v1h-1zM401 276h1v1h-1zM365 330h1v1h-1zM323 351h1v1h-1zM478 425h1v1h-1zM281 352h1v1h-1zM556 406h1v1h-1zM292 428h1v1h-1zM378 289h1v1h-1zM490 325h1v1h-1zM443 397h1v1h-1zM308 397h1v1h-1zM554 378h1v1h-1zM377 382h1v1h-1zM305 411h1v1h-1zM497 423h1v1h-1zM412 315h1v1h-1zM392 445h1v1h-1zM556 439h1v1h-1zM356 419h1v1h-1zM308 372h1v1h-1zM482 415h1v1h-1zM448 387h1v1h-1zM526 349h1v1h-1zM385 463h1v1h-1zM442 402h1v1h-1zM306 356h1v1h-1zM322 420h1v1h-1zM413 458h1v1h-1zM526 356h1v1h-1zM345 312h1v1h-1zM371 377h1v1h-1zM248 403h1v1h-1zM398 429h1v1h-1zM518 312h1v1h-1zM456 428h1v1h-1zM648 315h1v1h-1zM433 381h1v1h-1zM402 407h1v1h-1zM341 326h1v1h-1zM308 395h1v1h-1zM412 348h1v1h-1zM544 379h1v1h-1zM393 355h1v1h-1zM268 435h1v1h-1zM364 338h1v1h-1zM462 428h1v1h-1zM364 339h1v1h-1zM313 380h1v1h-1zM333 383h1v1h-1zM313 334h1v1h-1zM533 276h1v1h-1zM368 430h1v1h-1zM516 395h1v1h-1zM599 416h1v1h-1zM442 434h1v1h-1zM452 305h1v1h-1zM602 353h1v1h-1zM444 363h1v1h-1zM517 399h1v1h-1zM395 311h1v1h-1zM502 331h1v1h-1zM245 388h1v1h-1zM462 343h1v1h-1zM487 376h1v1h-1zM637 394h1v1h-1zM255 401h1v1h-1zM478 358h1v1h-1zM432 423h1v1h-1zM494 429h1v1h-1zM430 356h1v1h-1zM371 341h1v1h-1zM448 427h1v1h-1zM372 366h1v1h-1zM478 267h1v1h-1zM471 338h1v1h-1zM366 393h1v1h-1zM638 340h1v1h-1zM419 334h1v1h-1zM372 363h1v1h-1zM547 373h1v1h-1zM427 461h1v1h-1z" fill="#6d6d78" opacity="0.12"/><path d="M444 403h1v1h-1zM474 390h1v1h-1zM624 411h1v1h-1zM312 382h1v1h-1zM399 441h1v1h-1zM512 419h1v1h-1zM252 330h1v1h-1zM385 423h1v1h-1zM584 415h1v1h-1zM471 340h1v1h-1zM505 347h1v1h-1zM350 440h1v1h-1zM428 325h1v1h-1zM426 409h1v1h-1zM488 346h1v1h-1zM586 373h1v1h-1zM302 387h1v1h-1zM343 305h1v1h-1zM465 328h1v1h-1zM345 419h1v1h-1zM392 360h1v1h-1zM566 359h1v1h-1zM574 455h1v1h-1zM508 410h1v1h-1zM580 332h1v1h-1zM457 345h1v1h-1zM346 389h1v1h-1zM562 421h1v1h-1zM469 290h1v1h-1zM567 393h1v1h-1zM580 370h1v1h-1zM443 453h1v1h-1zM514 352h1v1h-1zM383 357h1v1h-1zM317 400h1v1h-1zM605 288h1v1h-1zM568 351h1v1h-1zM564 469h1v1h-1zM464 352h1v1h-1zM537 378h1v1h-1zM375 417h1v1h-1zM417 384h1v1h-1zM481 375h1v1h-1zM505 464h1v1h-1zM523 313h1v1h-1zM617 425h1v1h-1zM430 415h1v1h-1zM360 376h1v1h-1zM580 443h1v1h-1zM365 322h1v1h-1zM428 350h1v1h-1zM583 419h1v1h-1zM434 385h1v1h-1zM363 368h1v1h-1zM448 414h1v1h-1zM367 411h1v1h-1zM405 400h1v1h-1zM362 372h1v1h-1zM255 396h1v1h-1zM452 459h1v1h-1zM337 382h1v1h-1zM512 427h1v1h-1zM324 374h1v1h-1zM452 376h1v1h-1zM540 410h1v1h-1zM426 406h1v1h-1zM579 354h1v1h-1zM417 409h1v1h-1zM399 400h1v1h-1zM602 381h1v1h-1zM599 387h1v1h-1zM637 438h1v1h-1zM366 467h1v1h-1zM437 301h1v1h-1zM377 370h1v1h-1zM425 300h1v1h-1zM471 412h1v1h-1zM331 361h1v1h-1zM561 320h1v1h-1zM304 381h1v1h-1zM425 421h1v1h-1zM370 334h1v1h-1zM508 422h1v1h-1zM376 279h1v1h-1zM349 332h1v1h-1zM559 380h1v1h-1zM428 391h1v1h-1zM428 462h1v1h-1zM439 394h1v1h-1zM416 329h1v1h-1zM444 419h1v1h-1zM462 416h1v1h-1zM568 391h1v1h-1zM468 386h1v1h-1zM285 407h1v1h-1zM365 325h1v1h-1zM580 396h1v1h-1zM279 345h1v1h-1zM320 460h1v1h-1zM362 461h1v1h-1zM559 434h1v1h-1zM530 364h1v1h-1zM365 349h1v1h-1zM445 284h1v1h-1zM400 448h1v1h-1zM433 423h1v1h-1zM449 399h1v1h-1zM408 360h1v1h-1zM481 379h1v1h-1zM489 353h1v1h-1zM460 372h1v1h-1zM296 459h1v1h-1zM478 329h1v1h-1zM550 393h1v1h-1zM478 390h1v1h-1zM386 446h1v1h-1zM419 385h1v1h-1zM374 337h1v1h-1zM271 427h1v1h-1zM430 346h1v1h-1zM648 413h1v1h-1zM451 342h1v1h-1zM385 356h1v1h-1zM464 415h1v1h-1zM489 368h1v1h-1zM248 409h1v1h-1zM304 416h1v1h-1zM304 405h1v1h-1zM529 294h1v1h-1zM476 398h1v1h-1zM589 471h1v1h-1zM468 371h1v1h-1zM376 353h1v1h-1zM499 353h1v1h-1zM508 431h1v1h-1zM460 410h1v1h-1zM624 413h1v1h-1zM433 448h1v1h-1zM428 327h1v1h-1zM566 376h1v1h-1zM400 443h1v1h-1zM399 455h1v1h-1zM406 401h1v1h-1zM334 368h1v1h-1zM556 311h1v1h-1zM609 415h1v1h-1zM635 415h1v1h-1zM433 374h1v1h-1zM422 450h1v1h-1zM347 267h1v1h-1zM433 331h1v1h-1zM502 323h1v1h-1zM567 316h1v1h-1zM473 303h1v1h-1zM596 408h1v1h-1zM451 306h1v1h-1zM463 362h1v1h-1zM551 382h1v1h-1zM372 283h1v1h-1zM391 370h1v1h-1zM373 424h1v1h-1zM564 323h1v1h-1zM379 340h1v1h-1zM236 365h1v1h-1zM286 399h1v1h-1zM389 366h1v1h-1zM477 414h1v1h-1zM480 294h1v1h-1zM419 382h1v1h-1zM429 391h1v1h-1zM456 406h1v1h-1zM494 355h1v1h-1zM403 305h1v1h-1zM428 387h1v1h-1zM475 366h1v1h-1zM370 390h1v1h-1zM293 374h1v1h-1zM333 372h1v1h-1zM473 461h1v1h-1zM510 395h1v1h-1zM472 388h1v1h-1zM349 443h1v1h-1zM332 303h1v1h-1zM316 465h1v1h-1zM392 300h1v1h-1zM398 440h1v1h-1zM405 364h1v1h-1zM484 418h1v1h-1zM611 416h1v1h-1zM447 350h1v1h-1zM445 401h1v1h-1zM474 352h1v1h-1zM402 406h1v1h-1zM444 402h1v1h-1zM309 392h1v1h-1zM380 386h1v1h-1zM442 375h1v1h-1zM403 439h1v1h-1zM340 264h1v1h-1zM451 357h1v1h-1zM416 429h1v1h-1zM258 346h1v1h-1zM363 431h1v1h-1zM397 411h1v1h-1zM458 332h1v1h-1zM333 421h1v1h-1zM404 375h1v1h-1zM459 391h1v1h-1zM560 339h1v1h-1zM473 358h1v1h-1zM364 364h1v1h-1zM548 372h1v1h-1zM395 373h1v1h-1zM407 321h1v1h-1zM381 310h1v1h-1zM545 458h1v1h-1zM492 371h1v1h-1zM263 394h1v1h-1zM501 315h1v1h-1zM437 434h1v1h-1zM264 310h1v1h-1zM434 383h1v1h-1zM472 314h1v1h-1zM449 452h1v1h-1zM526 336h1v1h-1zM403 450h1v1h-1zM510 442h1v1h-1zM427 404h1v1h-1zM440 395h1v1h-1zM575 349h1v1h-1zM505 410h1v1h-1zM360 414h1v1h-1zM616 320h1v1h-1zM359 336h1v1h-1zM429 345h1v1h-1zM563 391h1v1h-1zM404 409h1v1h-1zM520 418h1v1h-1zM549 348h1v1h-1zM558 443h1v1h-1zM475 369h1v1h-1zM615 390h1v1h-1zM559 323h1v1h-1zM540 347h1v1h-1zM337 471h1v1h-1zM522 410h1v1h-1zM395 404h1v1h-1zM259 331h1v1h-1zM516 279h1v1h-1zM305 396h1v1h-1zM527 359h1v1h-1zM246 460h1v1h-1zM396 415h1v1h-1zM509 266h1v1h-1zM526 446h1v1h-1zM400 346h1v1h-1zM605 362h1v1h-1zM575 397h1v1h-1zM548 343h1v1h-1zM397 439h1v1h-1zM306 356h1v1h-1zM402 387h1v1h-1zM333 265h1v1h-1zM475 452h1v1h-1zM575 282h1v1h-1zM550 467h1v1h-1zM530 326h1v1h-1zM527 312h1v1h-1zM421 335h1v1h-1zM358 467h1v1h-1zM383 408h1v1h-1zM511 387h1v1h-1zM397 445h1v1h-1zM548 366h1v1h-1zM388 342h1v1h-1zM416 368h1v1h-1zM432 375h1v1h-1zM402 348h1v1h-1zM545 359h1v1h-1zM365 458h1v1h-1zM410 392h1v1h-1zM488 342h1v1h-1zM390 451h1v1h-1zM487 398h1v1h-1zM437 416h1v1h-1zM375 429h1v1h-1zM363 379h1v1h-1zM327 263h1v1h-1zM346 346h1v1h-1zM532 308h1v1h-1zM476 329h1v1h-1zM492 367h1v1h-1zM372 307h1v1h-1zM411 341h1v1h-1zM322 422h1v1h-1zM462 424h1v1h-1zM291 343h1v1h-1zM423 366h1v1h-1zM639 451h1v1h-1zM534 302h1v1h-1zM494 372h1v1h-1zM378 399h1v1h-1zM534 444h1v1h-1zM521 360h1v1h-1zM409 351h1v1h-1zM497 410h1v1h-1zM405 381h1v1h-1zM419 405h1v1h-1zM389 389h1v1h-1zM313 404h1v1h-1zM270 388h1v1h-1zM282 271h1v1h-1zM407 399h1v1h-1zM450 390h1v1h-1zM521 464h1v1h-1zM349 431h1v1h-1zM527 440h1v1h-1zM459 388h1v1h-1zM365 385h1v1h-1zM583 409h1v1h-1zM484 361h1v1h-1zM319 362h1v1h-1zM397 448h1v1h-1zM292 390h1v1h-1zM525 313h1v1h-1zM586 442h1v1h-1zM473 333h1v1h-1zM433 416h1v1h-1zM270 416h1v1h-1zM441 337h1v1h-1zM356 432h1v1h-1zM422 331h1v1h-1zM389 421h1v1h-1zM362 356h1v1h-1zM415 343h1v1h-1zM372 345h1v1h-1zM536 376h1v1h-1zM451 371h1v1h-1zM376 421h1v1h-1zM544 371h1v1h-1zM356 432h1v1h-1zM444 385h1v1h-1zM582 439h1v1h-1zM517 443h1v1h-1zM375 342h1v1h-1zM280 464h1v1h-1zM387 431h1v1h-1zM324 454h1v1h-1zM337 392h1v1h-1zM451 387h1v1h-1zM479 390h1v1h-1zM510 367h1v1h-1zM417 428h1v1h-1zM360 415h1v1h-1zM572 382h1v1h-1zM582 406h1v1h-1zM601 381h1v1h-1zM301 375h1v1h-1zM586 337h1v1h-1zM455 368h1v1h-1zM306 464h1v1h-1zM476 402h1v1h-1zM475 317h1v1h-1zM393 342h1v1h-1zM589 378h1v1h-1zM442 433h1v1h-1zM575 338h1v1h-1zM329 444h1v1h-1zM470 332h1v1h-1zM530 409h1v1h-1zM403 324h1v1h-1zM451 398h1v1h-1zM356 301h1v1h-1zM411 427h1v1h-1zM474 358h1v1h-1zM428 428h1v1h-1zM392 340h1v1h-1zM409 419h1v1h-1zM498 277h1v1h-1zM341 368h1v1h-1zM309 421h1v1h-1zM406 323h1v1h-1zM475 404h1v1h-1zM415 389h1v1h-1zM392 373h1v1h-1zM473 408h1v1h-1zM414 356h1v1h-1zM549 355h1v1h-1zM416 381h1v1h-1zM417 365h1v1h-1zM368 431h1v1h-1zM432 346h1v1h-1zM493 298h1v1h-1zM563 398h1v1h-1zM546 286h1v1h-1zM471 361h1v1h-1zM419 448h1v1h-1zM435 348h1v1h-1zM410 352h1v1h-1zM612 378h1v1h-1zM554 396h1v1h-1zM426 464h1v1h-1zM478 271h1v1h-1zM482 371h1v1h-1zM449 330h1v1h-1zM278 321h1v1h-1zM631 346h1v1h-1zM316 417h1v1h-1zM524 390h1v1h-1zM284 462h1v1h-1zM622 286h1v1h-1zM260 408h1v1h-1zM271 468h1v1h-1zM397 418h1v1h-1zM571 409h1v1h-1zM506 416h1v1h-1zM348 342h1v1h-1zM423 381h1v1h-1zM497 445h1v1h-1zM559 391h1v1h-1zM297 471h1v1h-1zM468 424h1v1h-1zM464 426h1v1h-1zM311 428h1v1h-1zM357 414h1v1h-1zM401 392h1v1h-1zM389 450h1v1h-1zM373 291h1v1h-1zM531 299h1v1h-1zM340 418h1v1h-1zM415 397h1v1h-1zM370 317h1v1h-1zM439 408h1v1h-1zM323 401h1v1h-1zM352 385h1v1h-1zM400 410h1v1h-1zM424 314h1v1h-1zM442 275h1v1h-1zM528 385h1v1h-1zM495 389h1v1h-1zM495 339h1v1h-1zM394 382h1v1h-1zM507 325h1v1h-1zM367 378h1v1h-1zM426 348h1v1h-1zM398 376h1v1h-1zM367 440h1v1h-1zM503 382h1v1h-1zM608 288h1v1h-1zM291 343h1v1h-1zM594 374h1v1h-1zM521 424h1v1h-1zM291 286h1v1h-1zM544 396h1v1h-1zM553 403h1v1h-1zM503 404h1v1h-1zM326 372h1v1h-1zM289 411h1v1h-1zM415 402h1v1h-1zM559 386h1v1h-1zM449 393h1v1h-1zM396 345h1v1h-1zM493 400h1v1h-1zM375 295h1v1h-1zM469 389h1v1h-1zM466 401h1v1h-1zM364 327h1v1h-1zM578 304h1v1h-1zM389 340h1v1h-1zM453 364h1v1h-1zM512 398h1v1h-1zM467 357h1v1h-1zM324 446h1v1h-1zM575 405h1v1h-1zM437 393h1v1h-1zM463 394h1v1h-1zM366 394h1v1h-1zM611 277h1v1h-1zM324 389h1v1h-1zM447 351h1v1h-1zM404 362h1v1h-1zM402 320h1v1h-1zM276 455h1v1h-1zM423 272h1v1h-1zM480 340h1v1h-1zM384 353h1v1h-1zM366 391h1v1h-1zM496 387h1v1h-1zM424 370h1v1h-1zM341 349h1v1h-1zM595 274h1v1h-1zM371 357h1v1h-1zM499 457h1v1h-1zM637 348h1v1h-1zM410 328h1v1h-1zM488 387h1v1h-1zM327 327h1v1h-1zM440 332h1v1h-1zM500 372h1v1h-1zM278 361h1v1h-1zM505 361h1v1h-1zM491 331h1v1h-1zM537 460h1v1h-1zM301 309h1v1h-1zM490 358h1v1h-1zM474 413h1v1h-1zM459 334h1v1h-1zM402 422h1v1h-1zM465 393h1v1h-1zM326 375h1v1h-1zM440 357h1v1h-1zM467 376h1v1h-1zM492 312h1v1h-1zM465 410h1v1h-1zM369 352h1v1h-1zM434 258h1v1h-1zM578 443h1v1h-1zM552 467h1v1h-1zM372 462h1v1h-1zM337 460h1v1h-1zM267 307h1v1h-1zM447 428h1v1h-1zM412 289h1v1h-1zM432 460h1v1h-1zM326 468h1v1h-1zM487 278h1v1h-1zM541 359h1v1h-1zM454 373h1v1h-1zM288 437h1v1h-1zM426 333h1v1h-1zM565 396h1v1h-1zM541 377h1v1h-1zM409 363h1v1h-1zM460 424h1v1h-1zM408 353h1v1h-1zM373 355h1v1h-1zM434 340h1v1h-1zM329 410h1v1h-1zM411 353h1v1h-1zM507 379h1v1h-1zM369 426h1v1h-1zM371 379h1v1h-1zM358 409h1v1h-1zM355 454h1v1h-1zM524 353h1v1h-1zM493 422h1v1h-1zM300 313h1v1h-1zM363 435h1v1h-1zM362 332h1v1h-1zM452 338h1v1h-1zM357 369h1v1h-1zM409 416h1v1h-1zM628 447h1v1h-1zM450 367h1v1h-1zM487 403h1v1h-1zM344 402h1v1h-1zM468 310h1v1h-1zM364 256h1v1h-1zM327 435h1v1h-1zM560 347h1v1h-1zM587 375h1v1h-1zM450 359h1v1h-1zM408 360h1v1h-1zM389 343h1v1h-1zM384 306h1v1h-1zM243 410h1v1h-1zM428 445h1v1h-1zM318 297h1v1h-1zM262 396h1v1h-1zM351 330h1v1h-1zM459 435h1v1h-1zM327 433h1v1h-1zM619 320h1v1h-1zM356 382h1v1h-1zM389 435h1v1h-1zM396 342h1v1h-1zM393 318h1v1h-1zM347 375h1v1h-1zM308 331h1v1h-1zM562 438h1v1h-1zM363 415h1v1h-1zM346 364h1v1h-1zM531 417h1v1h-1zM437 404h1v1h-1zM345 349h1v1h-1zM460 420h1v1h-1zM483 419h1v1h-1zM434 344h1v1h-1zM508 451h1v1h-1zM411 358h1v1h-1zM565 424h1v1h-1zM422 393h1v1h-1zM531 418h1v1h-1zM434 405h1v1h-1zM603 339h1v1h-1zM461 395h1v1h-1zM428 413h1v1h-1zM520 431h1v1h-1zM445 411h1v1h-1zM475 443h1v1h-1zM428 352h1v1h-1zM411 371h1v1h-1zM314 362h1v1h-1zM307 430h1v1h-1zM402 429h1v1h-1zM560 387h1v1h-1zM288 367h1v1h-1zM459 343h1v1h-1zM426 317h1v1h-1zM486 388h1v1h-1zM552 290h1v1h-1zM593 461h1v1h-1zM431 353h1v1h-1zM372 313h1v1h-1zM455 426h1v1h-1zM440 453h1v1h-1zM504 322h1v1h-1zM439 385h1v1h-1zM493 437h1v1h-1zM486 339h1v1h-1zM475 444h1v1h-1zM253 408h1v1h-1zM449 363h1v1h-1zM373 305h1v1h-1zM325 287h1v1h-1zM384 371h1v1h-1zM430 353h1v1h-1zM497 318h1v1h-1zM423 391h1v1h-1zM390 302h1v1h-1zM542 376h1v1h-1zM575 354h1v1h-1zM343 427h1v1h-1zM501 366h1v1h-1zM446 418h1v1h-1zM345 392h1v1h-1zM481 297h1v1h-1zM452 357h1v1h-1zM405 403h1v1h-1zM362 471h1v1h-1zM469 299h1v1h-1zM297 412h1v1h-1zM452 404h1v1h-1zM376 452h1v1h-1zM312 391h1v1h-1zM482 419h1v1h-1zM457 415h1v1h-1zM434 403h1v1h-1zM436 381h1v1h-1zM560 440h1v1h-1zM442 395h1v1h-1zM238 447h1v1h-1zM548 359h1v1h-1zM537 275h1v1h-1zM519 405h1v1h-1zM383 385h1v1h-1zM423 370h1v1h-1zM461 388h1v1h-1zM342 420h1v1h-1zM475 363h1v1h-1zM386 405h1v1h-1zM320 297h1v1h-1zM311 339h1v1h-1zM482 354h1v1h-1zM329 428h1v1h-1zM505 434h1v1h-1zM541 393h1v1h-1zM579 439h1v1h-1zM470 331h1v1h-1zM556 457h1v1h-1zM311 406h1v1h-1zM533 317h1v1h-1zM477 434h1v1h-1zM535 417h1v1h-1zM476 340h1v1h-1zM635 296h1v1h-1zM354 417h1v1h-1zM402 459h1v1h-1zM610 341h1v1h-1zM521 342h1v1h-1zM409 421h1v1h-1zM413 359h1v1h-1zM379 383h1v1h-1zM505 437h1v1h-1zM484 314h1v1h-1zM430 424h1v1h-1zM454 321h1v1h-1zM473 401h1v1h-1zM403 349h1v1h-1zM453 399h1v1h-1zM372 359h1v1h-1zM363 328h1v1h-1zM606 402h1v1h-1zM624 398h1v1h-1zM508 330h1v1h-1zM372 413h1v1h-1zM267 398h1v1h-1zM479 303h1v1h-1zM486 362h1v1h-1zM437 446h1v1h-1zM490 371h1v1h-1zM493 443h1v1h-1zM453 376h1v1h-1zM534 470h1v1h-1zM643 421h1v1h-1zM574 434h1v1h-1zM309 303h1v1h-1zM527 445h1v1h-1zM491 449h1v1h-1zM465 288h1v1h-1zM394 389h1v1h-1zM393 397h1v1h-1zM330 284h1v1h-1zM400 361h1v1h-1zM395 414h1v1h-1zM309 462h1v1h-1zM530 403h1v1h-1zM430 342h1v1h-1zM644 318h1v1h-1zM535 403h1v1h-1zM338 386h1v1h-1zM428 357h1v1h-1zM496 415h1v1h-1zM488 373h1v1h-1zM306 294h1v1h-1zM390 285h1v1h-1zM542 297h1v1h-1zM580 301h1v1h-1zM437 318h1v1h-1zM410 414h1v1h-1zM249 327h1v1h-1zM341 350h1v1h-1zM330 343h1v1h-1zM388 428h1v1h-1zM432 365h1v1h-1zM448 363h1v1h-1zM491 418h1v1h-1zM440 396h1v1h-1zM303 431h1v1h-1zM377 387h1v1h-1zM315 335h1v1h-1zM438 360h1v1h-1zM444 373h1v1h-1zM419 330h1v1h-1zM270 335h1v1h-1zM275 351h1v1h-1z" fill="#6d6d78" opacity="0.22"/><path d="M409 408h1v1h-1zM412 394h1v1h-1zM326 413h1v1h-1zM491 446h1v1h-1zM452 403h1v1h-1zM411 341h1v1h-1zM474 375h1v1h-1zM542 359h1v1h-1zM531 409h1v1h-1zM424 410h1v1h-1zM391 318h1v1h-1zM575 324h1v1h-1zM390 390h1v1h-1zM283 391h1v1h-1zM380 375h1v1h-1zM633 365h1v1h-1zM391 411h1v1h-1zM499 285h1v1h-1zM291 390h1v1h-1zM517 342h1v1h-1zM346 466h1v1h-1zM455 351h1v1h-1zM503 387h1v1h-1zM339 294h1v1h-1zM239 439h1v1h-1zM474 403h1v1h-1zM488 435h1v1h-1zM461 393h1v1h-1zM306 406h1v1h-1zM360 378h1v1h-1zM367 410h1v1h-1zM437 401h1v1h-1zM342 418h1v1h-1zM464 425h1v1h-1zM332 418h1v1h-1zM242 440h1v1h-1zM526 374h1v1h-1zM404 388h1v1h-1zM545 287h1v1h-1zM568 366h1v1h-1zM352 422h1v1h-1zM348 307h1v1h-1zM530 451h1v1h-1zM550 461h1v1h-1zM544 331h1v1h-1zM399 318h1v1h-1zM496 315h1v1h-1zM460 388h1v1h-1zM304 352h1v1h-1zM614 382h1v1h-1zM415 363h1v1h-1zM362 351h1v1h-1zM431 333h1v1h-1zM417 462h1v1h-1zM458 442h1v1h-1zM474 391h1v1h-1zM560 455h1v1h-1zM601 466h1v1h-1zM366 420h1v1h-1zM435 423h1v1h-1zM572 313h1v1h-1zM270 446h1v1h-1zM529 357h1v1h-1zM388 418h1v1h-1zM388 341h1v1h-1zM410 356h1v1h-1zM518 426h1v1h-1zM257 459h1v1h-1zM285 368h1v1h-1zM463 420h1v1h-1zM536 390h1v1h-1zM543 429h1v1h-1zM464 370h1v1h-1zM536 391h1v1h-1zM428 471h1v1h-1zM393 417h1v1h-1zM594 405h1v1h-1zM411 307h1v1h-1zM492 365h1v1h-1zM265 403h1v1h-1zM314 418h1v1h-1zM447 448h1v1h-1zM438 398h1v1h-1zM297 323h1v1h-1zM480 371h1v1h-1zM463 380h1v1h-1zM405 353h1v1h-1zM485 398h1v1h-1zM270 457h1v1h-1zM355 273h1v1h-1zM489 409h1v1h-1zM461 347h1v1h-1zM517 311h1v1h-1zM461 357h1v1h-1zM316 454h1v1h-1zM406 379h1v1h-1zM438 263h1v1h-1zM487 363h1v1h-1zM455 421h1v1h-1zM455 338h1v1h-1zM251 259h1v1h-1zM627 329h1v1h-1zM483 409h1v1h-1zM467 385h1v1h-1zM378 360h1v1h-1zM326 339h1v1h-1zM544 426h1v1h-1zM292 371h1v1h-1zM399 379h1v1h-1zM432 318h1v1h-1zM350 459h1v1h-1zM468 366h1v1h-1zM400 416h1v1h-1zM287 414h1v1h-1zM385 307h1v1h-1zM463 387h1v1h-1zM440 343h1v1h-1zM464 367h1v1h-1zM443 394h1v1h-1zM577 428h1v1h-1zM441 367h1v1h-1zM448 330h1v1h-1zM558 401h1v1h-1zM420 417h1v1h-1zM442 413h1v1h-1zM447 317h1v1h-1zM400 435h1v1h-1zM337 380h1v1h-1zM446 441h1v1h-1zM308 333h1v1h-1zM339 314h1v1h-1zM465 423h1v1h-1zM499 312h1v1h-1zM404 411h1v1h-1zM495 379h1v1h-1zM394 319h1v1h-1zM354 346h1v1h-1zM395 310h1v1h-1zM372 399h1v1h-1zM317 288h1v1h-1zM375 278h1v1h-1zM361 341h1v1h-1zM327 285h1v1h-1zM389 377h1v1h-1zM417 305h1v1h-1zM331 320h1v1h-1zM428 419h1v1h-1zM554 449h1v1h-1zM485 454h1v1h-1zM353 389h1v1h-1zM385 323h1v1h-1zM463 331h1v1h-1zM451 348h1v1h-1zM300 320h1v1h-1zM538 340h1v1h-1zM470 349h1v1h-1zM436 413h1v1h-1zM309 394h1v1h-1zM562 416h1v1h-1zM591 399h1v1h-1zM466 398h1v1h-1zM359 427h1v1h-1zM355 379h1v1h-1zM423 352h1v1h-1zM321 329h1v1h-1zM551 339h1v1h-1zM525 446h1v1h-1zM572 399h1v1h-1zM451 323h1v1h-1zM378 313h1v1h-1zM423 383h1v1h-1zM356 388h1v1h-1zM519 356h1v1h-1zM390 275h1v1h-1zM440 334h1v1h-1zM452 381h1v1h-1zM618 353h1v1h-1zM524 399h1v1h-1zM600 347h1v1h-1zM394 419h1v1h-1zM589 366h1v1h-1zM422 409h1v1h-1zM411 399h1v1h-1zM337 385h1v1h-1zM501 363h1v1h-1zM529 400h1v1h-1zM457 412h1v1h-1zM512 333h1v1h-1zM556 402h1v1h-1zM466 369h1v1h-1zM291 284h1v1h-1zM510 369h1v1h-1zM440 404h1v1h-1zM385 409h1v1h-1zM468 373h1v1h-1zM429 446h1v1h-1zM344 348h1v1h-1zM619 335h1v1h-1zM634 421h1v1h-1zM384 397h1v1h-1zM490 376h1v1h-1zM327 376h1v1h-1zM495 360h1v1h-1zM460 407h1v1h-1zM387 283h1v1h-1zM430 387h1v1h-1zM424 324h1v1h-1zM327 373h1v1h-1zM472 271h1v1h-1zM547 362h1v1h-1zM430 337h1v1h-1zM513 437h1v1h-1zM394 277h1v1h-1zM454 365h1v1h-1zM435 438h1v1h-1zM532 405h1v1h-1zM557 342h1v1h-1zM380 351h1v1h-1zM415 426h1v1h-1zM453 397h1v1h-1zM469 367h1v1h-1zM437 404h1v1h-1zM410 439h1v1h-1zM344 364h1v1h-1zM337 376h1v1h-1zM483 349h1v1h-1zM387 424h1v1h-1zM487 320h1v1h-1zM418 457h1v1h-1zM605 383h1v1h-1zM509 417h1v1h-1zM302 368h1v1h-1zM373 412h1v1h-1zM416 409h1v1h-1zM315 373h1v1h-1zM336 415h1v1h-1zM458 263h1v1h-1zM442 380h1v1h-1zM450 309h1v1h-1zM509 433h1v1h-1zM346 312h1v1h-1zM431 394h1v1h-1zM611 450h1v1h-1zM495 394h1v1h-1zM445 412h1v1h-1zM472 377h1v1h-1zM349 409h1v1h-1zM240 437h1v1h-1zM485 423h1v1h-1zM318 423h1v1h-1zM336 368h1v1h-1zM521 426h1v1h-1zM636 431h1v1h-1zM438 344h1v1h-1zM255 449h1v1h-1zM453 372h1v1h-1zM415 422h1v1h-1zM426 310h1v1h-1zM568 343h1v1h-1zM432 382h1v1h-1zM428 396h1v1h-1zM435 357h1v1h-1zM382 354h1v1h-1zM350 398h1v1h-1zM422 277h1v1h-1zM351 333h1v1h-1zM401 325h1v1h-1zM437 364h1v1h-1zM540 444h1v1h-1zM272 287h1v1h-1zM554 364h1v1h-1zM560 398h1v1h-1zM571 378h1v1h-1zM627 382h1v1h-1zM362 400h1v1h-1zM616 383h1v1h-1zM615 269h1v1h-1zM420 331h1v1h-1zM516 329h1v1h-1zM499 386h1v1h-1zM384 335h1v1h-1zM492 456h1v1h-1zM286 358h1v1h-1zM514 429h1v1h-1zM257 280h1v1h-1zM248 432h1v1h-1zM306 458h1v1h-1zM443 446h1v1h-1zM370 358h1v1h-1zM330 326h1v1h-1zM545 388h1v1h-1zM489 389h1v1h-1zM357 380h1v1h-1zM461 379h1v1h-1zM457 303h1v1h-1zM600 287h1v1h-1zM383 424h1v1h-1zM416 332h1v1h-1zM475 410h1v1h-1zM331 397h1v1h-1zM387 364h1v1h-1zM377 463h1v1h-1zM529 376h1v1h-1zM402 367h1v1h-1zM549 391h1v1h-1zM565 406h1v1h-1zM306 362h1v1h-1zM371 362h1v1h-1zM449 333h1v1h-1zM399 360h1v1h-1zM427 455h1v1h-1zM472 408h1v1h-1zM542 305h1v1h-1zM512 266h1v1h-1zM458 365h1v1h-1zM455 382h1v1h-1zM515 451h1v1h-1zM486 355h1v1h-1zM492 415h1v1h-1zM377 361h1v1h-1zM425 366h1v1h-1zM327 339h1v1h-1zM445 396h1v1h-1zM380 306h1v1h-1zM637 368h1v1h-1zM423 437h1v1h-1zM506 269h1v1h-1zM532 300h1v1h-1zM392 325h1v1h-1zM449 457h1v1h-1zM339 422h1v1h-1zM530 346h1v1h-1zM358 440h1v1h-1zM445 410h1v1h-1zM316 300h1v1h-1zM368 417h1v1h-1zM438 349h1v1h-1zM514 427h1v1h-1zM459 340h1v1h-1zM363 355h1v1h-1zM425 439h1v1h-1zM539 369h1v1h-1zM466 357h1v1h-1zM412 328h1v1h-1zM319 370h1v1h-1zM436 367h1v1h-1zM404 373h1v1h-1zM277 352h1v1h-1zM484 443h1v1h-1zM284 403h1v1h-1zM517 395h1v1h-1zM459 336h1v1h-1zM357 344h1v1h-1zM285 381h1v1h-1zM433 281h1v1h-1zM465 354h1v1h-1zM454 396h1v1h-1zM415 419h1v1h-1zM481 298h1v1h-1zM481 418h1v1h-1zM598 467h1v1h-1zM236 391h1v1h-1zM361 358h1v1h-1zM403 357h1v1h-1zM456 361h1v1h-1zM376 387h1v1h-1zM570 332h1v1h-1zM259 387h1v1h-1zM540 379h1v1h-1zM569 400h1v1h-1zM449 350h1v1h-1zM575 330h1v1h-1zM280 261h1v1h-1zM572 329h1v1h-1zM345 348h1v1h-1zM433 306h1v1h-1zM529 330h1v1h-1zM460 369h1v1h-1zM472 284h1v1h-1zM400 393h1v1h-1zM352 294h1v1h-1zM318 464h1v1h-1zM389 410h1v1h-1zM422 298h1v1h-1zM419 288h1v1h-1zM415 361h1v1h-1zM340 442h1v1h-1zM343 261h1v1h-1zM613 417h1v1h-1zM436 264h1v1h-1zM517 438h1v1h-1zM383 351h1v1h-1zM328 300h1v1h-1zM360 331h1v1h-1zM514 398h1v1h-1zM451 329h1v1h-1zM428 417h1v1h-1zM254 412h1v1h-1zM513 392h1v1h-1zM309 393h1v1h-1zM354 372h1v1h-1zM616 406h1v1h-1zM467 363h1v1h-1zM390 329h1v1h-1zM501 410h1v1h-1zM506 459h1v1h-1zM316 367h1v1h-1zM442 382h1v1h-1zM471 467h1v1h-1zM568 326h1v1h-1zM375 411h1v1h-1zM391 298h1v1h-1zM560 327h1v1h-1zM341 340h1v1h-1zM445 413h1v1h-1zM424 433h1v1h-1zM338 419h1v1h-1zM465 284h1v1h-1zM461 421h1v1h-1zM575 338h1v1h-1zM634 389h1v1h-1zM433 312h1v1h-1zM398 406h1v1h-1zM414 386h1v1h-1zM541 373h1v1h-1zM406 384h1v1h-1zM400 397h1v1h-1zM307 400h1v1h-1zM506 450h1v1h-1zM564 382h1v1h-1zM498 310h1v1h-1zM440 364h1v1h-1zM437 354h1v1h-1zM481 397h1v1h-1zM296 379h1v1h-1zM467 314h1v1h-1zM291 402h1v1h-1zM434 368h1v1h-1zM393 293h1v1h-1zM439 349h1v1h-1zM598 325h1v1h-1zM372 328h1v1h-1zM572 318h1v1h-1zM500 437h1v1h-1zM545 352h1v1h-1zM442 266h1v1h-1zM603 440h1v1h-1zM352 322h1v1h-1zM432 435h1v1h-1zM395 325h1v1h-1zM545 302h1v1h-1zM474 390h1v1h-1zM387 382h1v1h-1zM366 384h1v1h-1zM620 464h1v1h-1zM549 403h1v1h-1zM441 387h1v1h-1zM516 270h1v1h-1zM274 397h1v1h-1zM332 304h1v1h-1zM355 314h1v1h-1zM455 453h1v1h-1zM317 389h1v1h-1zM538 463h1v1h-1zM312 400h1v1h-1zM376 408h1v1h-1zM467 404h1v1h-1zM507 338h1v1h-1zM375 412h1v1h-1zM324 401h1v1h-1zM281 329h1v1h-1zM371 336h1v1h-1zM425 362h1v1h-1zM349 397h1v1h-1zM494 357h1v1h-1zM352 356h1v1h-1zM396 397h1v1h-1zM455 276h1v1h-1zM457 420h1v1h-1zM278 316h1v1h-1zM640 413h1v1h-1zM445 423h1v1h-1zM489 420h1v1h-1zM387 417h1v1h-1zM552 422h1v1h-1zM487 375h1v1h-1zM449 357h1v1h-1zM499 364h1v1h-1zM274 404h1v1h-1zM326 411h1v1h-1zM450 425h1v1h-1zM509 303h1v1h-1zM350 373h1v1h-1zM378 377h1v1h-1zM360 467h1v1h-1zM341 373h1v1h-1zM401 388h1v1h-1zM531 358h1v1h-1zM360 423h1v1h-1zM568 461h1v1h-1zM512 425h1v1h-1zM578 398h1v1h-1zM530 447h1v1h-1zM561 336h1v1h-1zM425 470h1v1h-1zM443 368h1v1h-1zM522 281h1v1h-1zM516 365h1v1h-1zM450 377h1v1h-1zM315 422h1v1h-1zM438 339h1v1h-1zM475 359h1v1h-1zM469 389h1v1h-1zM623 415h1v1h-1zM383 452h1v1h-1zM393 368h1v1h-1zM332 386h1v1h-1zM445 417h1v1h-1zM418 353h1v1h-1zM469 422h1v1h-1zM275 351h1v1h-1zM441 392h1v1h-1zM529 310h1v1h-1zM383 369h1v1h-1zM442 418h1v1h-1zM434 293h1v1h-1zM580 294h1v1h-1zM468 414h1v1h-1zM527 301h1v1h-1zM370 387h1v1h-1zM367 331h1v1h-1zM407 375h1v1h-1zM317 390h1v1h-1zM392 358h1v1h-1zM350 303h1v1h-1zM469 309h1v1h-1zM505 438h1v1h-1zM431 455h1v1h-1zM447 360h1v1h-1zM407 442h1v1h-1zM421 469h1v1h-1zM521 392h1v1h-1zM473 306h1v1h-1zM550 404h1v1h-1zM580 326h1v1h-1zM415 384h1v1h-1zM576 286h1v1h-1zM318 373h1v1h-1zM307 422h1v1h-1zM355 325h1v1h-1zM367 441h1v1h-1zM535 455h1v1h-1zM363 404h1v1h-1zM289 459h1v1h-1zM510 337h1v1h-1zM468 443h1v1h-1zM540 379h1v1h-1zM617 410h1v1h-1zM397 452h1v1h-1zM464 453h1v1h-1zM508 402h1v1h-1zM487 302h1v1h-1zM487 365h1v1h-1zM530 418h1v1h-1zM490 377h1v1h-1zM417 428h1v1h-1zM343 395h1v1h-1zM397 321h1v1h-1zM368 352h1v1h-1zM448 383h1v1h-1zM544 409h1v1h-1zM575 451h1v1h-1zM585 376h1v1h-1zM504 403h1v1h-1zM507 362h1v1h-1zM330 375h1v1h-1zM575 377h1v1h-1zM498 435h1v1h-1zM442 341h1v1h-1zM467 379h1v1h-1zM359 402h1v1h-1zM455 321h1v1h-1zM478 369h1v1h-1zM419 290h1v1h-1zM411 402h1v1h-1zM395 417h1v1h-1zM541 440h1v1h-1zM508 416h1v1h-1zM509 404h1v1h-1zM480 273h1v1h-1zM477 277h1v1h-1zM331 379h1v1h-1zM385 288h1v1h-1zM281 393h1v1h-1zM409 271h1v1h-1zM541 374h1v1h-1zM371 310h1v1h-1zM419 391h1v1h-1zM278 395h1v1h-1zM414 396h1v1h-1zM536 459h1v1h-1zM360 452h1v1h-1zM421 343h1v1h-1zM449 453h1v1h-1zM473 361h1v1h-1zM369 450h1v1h-1zM354 330h1v1h-1zM464 340h1v1h-1zM385 360h1v1h-1zM602 368h1v1h-1zM352 378h1v1h-1zM380 423h1v1h-1zM497 410h1v1h-1zM378 419h1v1h-1zM401 357h1v1h-1zM386 399h1v1h-1zM375 402h1v1h-1zM263 352h1v1h-1zM502 450h1v1h-1zM381 457h1v1h-1zM609 364h1v1h-1zM510 309h1v1h-1zM557 417h1v1h-1zM260 418h1v1h-1zM600 395h1v1h-1zM458 429h1v1h-1zM392 346h1v1h-1zM307 356h1v1h-1zM444 395h1v1h-1zM343 326h1v1h-1zM399 383h1v1h-1zM448 420h1v1h-1zM452 436h1v1h-1zM376 315h1v1h-1zM451 379h1v1h-1zM408 405h1v1h-1zM519 379h1v1h-1zM570 337h1v1h-1zM455 387h1v1h-1zM452 366h1v1h-1zM559 370h1v1h-1zM464 392h1v1h-1zM350 393h1v1h-1zM442 407h1v1h-1zM363 420h1v1h-1zM507 365h1v1h-1zM452 352h1v1h-1zM326 300h1v1h-1zM512 384h1v1h-1zM470 418h1v1h-1zM425 356h1v1h-1zM455 347h1v1h-1zM371 319h1v1h-1zM604 359h1v1h-1zM419 360h1v1h-1zM614 441h1v1h-1zM380 375h1v1h-1zM423 386h1v1h-1zM374 403h1v1h-1zM563 431h1v1h-1zM474 361h1v1h-1zM591 391h1v1h-1zM401 311h1v1h-1zM548 399h1v1h-1zM507 410h1v1h-1zM437 463h1v1h-1zM639 402h1v1h-1zM621 358h1v1h-1zM329 381h1v1h-1zM395 364h1v1h-1zM632 412h1v1h-1zM387 469h1v1h-1zM551 349h1v1h-1zM312 397h1v1h-1zM386 365h1v1h-1zM295 391h1v1h-1zM514 393h1v1h-1zM523 384h1v1h-1zM431 293h1v1h-1zM512 308h1v1h-1zM267 467h1v1h-1zM376 457h1v1h-1zM423 421h1v1h-1zM492 354h1v1h-1zM362 461h1v1h-1zM446 377h1v1h-1zM396 286h1v1h-1zM374 392h1v1h-1zM459 335h1v1h-1zM453 465h1v1h-1zM398 400h1v1h-1zM389 340h1v1h-1zM456 307h1v1h-1zM414 296h1v1h-1zM366 319h1v1h-1zM351 380h1v1h-1zM401 392h1v1h-1zM571 413h1v1h-1zM483 397h1v1h-1zM582 367h1v1h-1zM342 362h1v1h-1zM396 326h1v1h-1zM609 435h1v1h-1zM453 371h1v1h-1zM385 307h1v1h-1zM408 414h1v1h-1zM355 465h1v1h-1zM364 335h1v1h-1z" fill="#6d6d78" opacity="0.34"/><path d="M346,286.5 H358.5 V400" fill="none" stroke="#c9cff6" stroke-width="1"/><path d="M472,288.5 H459.5 V365" fill="none" stroke="#c9cff6" stroke-width="1"/><path d="M289,349.5 H299.5 V380" fill="none" stroke="#c9cff6" stroke-width="1"/><path d="M520,357.5 H507.5 V402" fill="none" stroke="#c9cff6" stroke-width="1"/><path d="M250,419.5 H300" fill="none" stroke="#c9cff6" stroke-width="1"/><path d="M557,419.5 H527" fill="none" stroke="#c9cff6" stroke-width="1"/><rect x="135" y="273" width="175" height="26" rx="2" fill="#f0f2fd"/><rect x="505" y="275" width="178" height="26" rx="2" fill="#f0f2fd"/><rect x="135" y="336" width="117" height="26" rx="2" fill="#f0f2fd"/><rect x="555" y="344" width="120" height="26" rx="2" fill="#f0f2fd"/><rect x="111" y="406" width="103" height="26" rx="2" fill="#f0f2fd"/><rect x="592" y="406" width="104" height="26" rx="2" fill="#f0f2fd"/><circle cx="323.6" cy="286" r="23" fill="#fbfbff" stroke="#bfc8f8" stroke-width="1"/><circle cx="323.6" cy="286" r="21" fill="#e9ecfc"/><path d="M320.6,261.5 h6 l-3,3 z M320.6,310.5 h6 l-3,-3 z" fill="#b0baf5"/><path d="M296.6,278.5 h54 M296.6,293.5 h54" stroke="#cdd4f8" stroke-width="1"/><circle cx="494.3" cy="287.6" r="23" fill="#fbfbff" stroke="#bfc8f8" stroke-width="1"/><circle cx="494.3" cy="287.6" r="21" fill="#e9ecfc"/><path d="M491.3,263.1 h6 l-3,3 z M491.3,312.1 h6 l-3,-3 z" fill="#b0baf5"/><path d="M467.3,280.1 h54 M467.3,295.1 h54" stroke="#cdd4f8" stroke-width="1"/><circle cx="266.8" cy="349" r="23" fill="#fbfbff" stroke="#bfc8f8" stroke-width="1"/><circle cx="266.8" cy="349" r="21" fill="#e9ecfc"/><path d="M263.8,324.5 h6 l-3,3 z M263.8,373.5 h6 l-3,-3 z" fill="#b0baf5"/><path d="M239.8,341.5 h54 M239.8,356.5 h54" stroke="#cdd4f8" stroke-width="1"/><circle cx="542.2" cy="356.7" r="23" fill="#fbfbff" stroke="#bfc8f8" stroke-width="1"/><circle cx="542.2" cy="356.7" r="21" fill="#e9ecfc"/><path d="M539.2,332.2 h6 l-3,3 z M539.2,381.2 h6 l-3,-3 z" fill="#b0baf5"/><path d="M515.2,349.2 h54 M515.2,364.2 h54" stroke="#cdd4f8" stroke-width="1"/><circle cx="228.2" cy="419" r="23" fill="#fbfbff" stroke="#bfc8f8" stroke-width="1"/><circle cx="228.2" cy="419" r="21" fill="#e9ecfc"/><path d="M225.2,394.5 h6 l-3,3 z M225.2,443.5 h6 l-3,-3 z" fill="#b0baf5"/><path d="M201.2,411.5 h54 M201.2,426.5 h54" stroke="#cdd4f8" stroke-width="1"/><circle cx="578.8" cy="419" r="23" fill="#fbfbff" stroke="#bfc8f8" stroke-width="1"/><circle cx="578.8" cy="419" r="21" fill="#e9ecfc"/><path d="M575.8,394.5 h6 l-3,3 z M575.8,443.5 h6 l-3,-3 z" fill="#b0baf5"/><path d="M562.8,406.5 h32 M562.8,431.5 h32" stroke="#cdd4f8" stroke-width="1"/><path d="M551.8,411.5 h6 M599.8,411.5 h6 M551.8,426.5 h6 M599.8,426.5 h6" stroke="#c3cbf7" stroke-width="1"/><path d="M267,438 L304,453.5 L304,475 L267,475 Z" fill="url(#fadeL)"/><path d="M304,453.5 L341,438 L341,475 L304,475 Z" fill="url(#fadeR)"/><path d="M267,458 L304,473 L341,458" fill="none" stroke="#3b3fa8" stroke-width="1.2"/><path d="M267,436 L304,420 L341,436.5 L304,452 Z" fill="#e9ebef"/><path d="M267,436 L304,452 L341,436.5 L341,438.5 L304,454 L267,438 Z" fill="#b9c1cd"/><path d="M284,378 Q284,374 288,373 L312,364 L313,366 L289,375 Q287,376 287,379 L287,437 L284,435 Z" fill="#c3cad6"/><path d="M287,383 L313,373 L313,424 L287,436 Z" fill="#dde9fb"/><path d="M315.5,408 h4.5 l0.5,12 h-5.5z" fill="#f4f6f8"/><path d="M317,409 l2,0 l-0.5,6 l-1.5,0z" fill="#3aa39a"/><circle cx="317.8" cy="406" r="1.7" fill="#3a4a70"/><path d="M315.5,420 L313,437 L315.5,437.5 L318,425 L320.5,437.5 L323,437 L320.5,420 Z" fill="#283a63"/><path d="M341,364 L375,364 L375,402 L341,402 Z" fill="url(#holo)"/><path d="M327,413 L352,424 L352,475 L341,475 L341,433 L327,427 Z" fill="url(#col)"/><path d="M352,424 L387,410 L387,428 L364,437 L364,475 L352,475 Z" fill="url(#colR)"/><path d="M360,428 L365,426 L365,475 L360,475 Z M368.3,424.5 L373.6,422 L373.6,432.5 L368.3,435 Z M377,420.5 L382.3,418.3 L382.3,428.6 L377,430.8 Z" fill="#4b4fc4"/><path d="M327,413 L358,400 L387,410 L352,424 Z" fill="#f2f3f8"/><path d="M333,407 L355,414 L382,402 L382,408 L355,420 L333,413 Z" fill="#3c41b0"/><path d="M333,407 L363,394.5 L382,402 L355,414 Z" fill="#7f92e8"/><path d="M342,406.5 L363,398 L375,402.5 L355,411 Z" fill="#bfe3f0"/><circle cx="346" cy="367" r="4" fill="#c9eef8"/><path d="M346,367 v-4 a4,4 0 0 1 4,4z" fill="#8fd8ee"/><path d="M373,372 l5,-3 l5,2 v7 l-10,0z" fill="#d3ebf6"/><path d="M325,388 L340,381 M392,378 L405,383" stroke="#b4e4f0" stroke-width="1"/><path d="M364,441 L436,471 L436,475 L364,475 Z" fill="url(#fadeL)"/><path d="M436,471 L491,449 L491,475 L436,475 Z" fill="url(#fadeR)"/><path d="M364,439 L424,413 L491,441 L436,468.5 Z" fill="#eef0f3"/><path d="M364,439 L436,468.5 L491,446 L491,449 L436,471.5 L364,441.5 Z" fill="#b9c1cd"/><path d="M420,351 L491,380 Q493,381 493,384 L493,443 L489,441 L489,384 L422,357 Z" fill="#dfe4ec"/><path d="M422,359 L487,386 L487,440 L422,412 Z" fill="url(#scr)"/><path d="M427,372 L482,395 L482,432 L427,409 Z" fill="#ffffff"/><circle cx="425" cy="364.5" r="1" fill="#fff"/><circle cx="428.3" cy="366" r="1" fill="#fff"/><circle cx="431.6" cy="367.4" r="1" fill="#fff"/><path d="M432,378 l10,4" stroke="#9fb3d6" stroke-width="1"/><path d="M460,390 l7,3 M469,394 l3,1.2 M474,396 l3,1.2" stroke="#6c8bd0" stroke-width="1.2"/><circle cx="441" cy="400" r="6" fill="none" stroke="#4d8fd6" stroke-width="2.5"/><circle cx="441" cy="400" r="2.5" fill="#7eb6ea"/><circle cx="466" cy="399" r="2.5" fill="#8aa0e8"/><circle cx="470" cy="403" r="2" fill="#7b8fe0"/><circle cx="474" cy="398" r="2" fill="#a9d3f0"/><circle cx="463" cy="404" r="1.5" fill="#9aa8ee"/><path d="M463,410 l10,4 M463,413 l8,3.2 M463,416 l9,3.6" stroke="#a7b3d6" stroke-width="0.8"/><path d="M438,341 v12 M441,344 v10 M444,340 v14 M447,346 v9 M450,344 v11" stroke="#a8e1f0" stroke-width="1"/><path d="M456,349 L478,357" stroke="#b4e4f0" stroke-width="1"/><circle cx="410" cy="411" r="2" fill="#1f2638"/><path d="M405,414 h9 l1,9 h-11z" fill="#e06872"/><path d="M406,423 h7 l1,20 h-2 l-2.5,-15 l-2.5,15 h-2z" fill="#4a5570"/><path d="M414,418 l4,-1 v4 l-4,1z" fill="#4a7fd0"/><circle cx="436" cy="418" r="2" fill="#1f2638"/><path d="M433,407 l1,8" stroke="#1f2638" stroke-width="1.2"/><path d="M432,421 h8 v10 h-8z" fill="#1f2a44"/><path d="M432,431 h8 l-1,21 h-2 l-1,-15 l-1,15 h-2z" fill="#3b63c8"/><path d="M438,428 l4,0 v5 l-4,0z" fill="#7ed0e0"/><path d="M491,434 L510,442 L510,475 L491,475 Z" fill="url(#fadeL)"/><path d="M510,442 L539,430 L539,475 L510,475 Z" fill="url(#fadeR)"/><path d="M491,434 L518,423 L539,430 L510,442 Z" fill="#f0f2f6"/><path d="M494,412 L511,420 L511,436 L494,428 Z" fill="#5b63cc"/><path d="M511,420 L527,413 L527,430 L511,436 Z" fill="#94a6f0"/><path d="M494,412 L511,405 L527,413 L511,420 Z" fill="#b7cb5c"/><path d="M510,413 Q507,400 508,392 Q510,385 512,392 Q514,400 511,413 Z" fill="#4f8a3a"/><path d="M511,413 Q513,400 511,390 Q514,398 512,413z" fill="#7ab04e"/><text x="373" y="222" font-size="15.5" font-weight="bold" fill="#2b2b2b" textLength="62" font-family="Liberation Sans, sans-serif" lengthAdjust="spacingAndGlyphs">教学后台</text><text x="367.5" y="239.5" font-size="7.3" fill="#555" textLength="73" font-family="Liberation Sans, sans-serif" lengthAdjust="spacingAndGlyphs">教学业务管理服务平台</text><text x="306.5" y="289.5" font-size="8.4" fill="#4b56d0" textLength="33.3" font-family="Liberation Sans, sans-serif" lengthAdjust="spacingAndGlyphs">考务管理</text><text x="478.9" y="291" font-size="8.4" fill="#4b56d0" textLength="33.3" font-family="Liberation Sans, sans-serif" lengthAdjust="spacingAndGlyphs">教务管理</text><text x="249.5" y="352.5" font-size="8.4" fill="#4b56d0" textLength="33.7" font-family="Liberation Sans, sans-serif" lengthAdjust="spacingAndGlyphs">教学数据</text><text x="527" y="360" font-size="8.4" fill="#4b56d0" textLength="32.0" font-family="Liberation Sans, sans-serif" lengthAdjust="spacingAndGlyphs">就业管理</text><text x="213.2" y="422.5" font-size="8.4" fill="#4b56d0" textLength="33.3" font-family="Liberation Sans, sans-serif" lengthAdjust="spacingAndGlyphs">反馈管理</text><text x="562.4" y="419" font-size="8.4" fill="#4b56d0" textLength="33.6" font-family="Liberation Sans, sans-serif" lengthAdjust="spacingAndGlyphs">就业数据</text><text x="571.3" y="428.3" font-size="8.4" fill="#4b56d0" textLength="16.0" font-family="Liberation Sans, sans-serif" lengthAdjust="spacingAndGlyphs">报告</text><text x="142.3" y="289.5" font-size="7.3" fill="#555" textLength="146.3" font-family="Liberation Sans, sans-serif" lengthAdjust="spacingAndGlyphs">班级，升级，员工，社招类型的在线考试管理</text><text x="530" y="291.5" font-size="7.3" fill="#555" textLength="87.0" font-family="Liberation Sans, sans-serif" lengthAdjust="spacingAndGlyphs">教师发布等教务工作的管理</text><text x="159.6" y="352.5" font-size="7.3" fill="#555" textLength="72.6" font-family="Liberation Sans, sans-serif" lengthAdjust="spacingAndGlyphs">多维度教学数据的展示</text><text x="578" y="360" font-size="7.3" fill="#555" textLength="65.6" font-family="Liberation Sans, sans-serif" lengthAdjust="spacingAndGlyphs">就业服务的相关管理</text><text x="122" y="422.5" font-size="7.3" fill="#555" textLength="73.0" font-family="Liberation Sans, sans-serif" lengthAdjust="spacingAndGlyphs">多渠道反馈信息的管理</text><text x="614.3" y="422.5" font-size="7.3" fill="#555" textLength="72.9" font-family="Liberation Sans, sans-serif" lengthAdjust="spacingAndGlyphs">学员就业数据报告管理</text></svg>
</div>
</body></html>
